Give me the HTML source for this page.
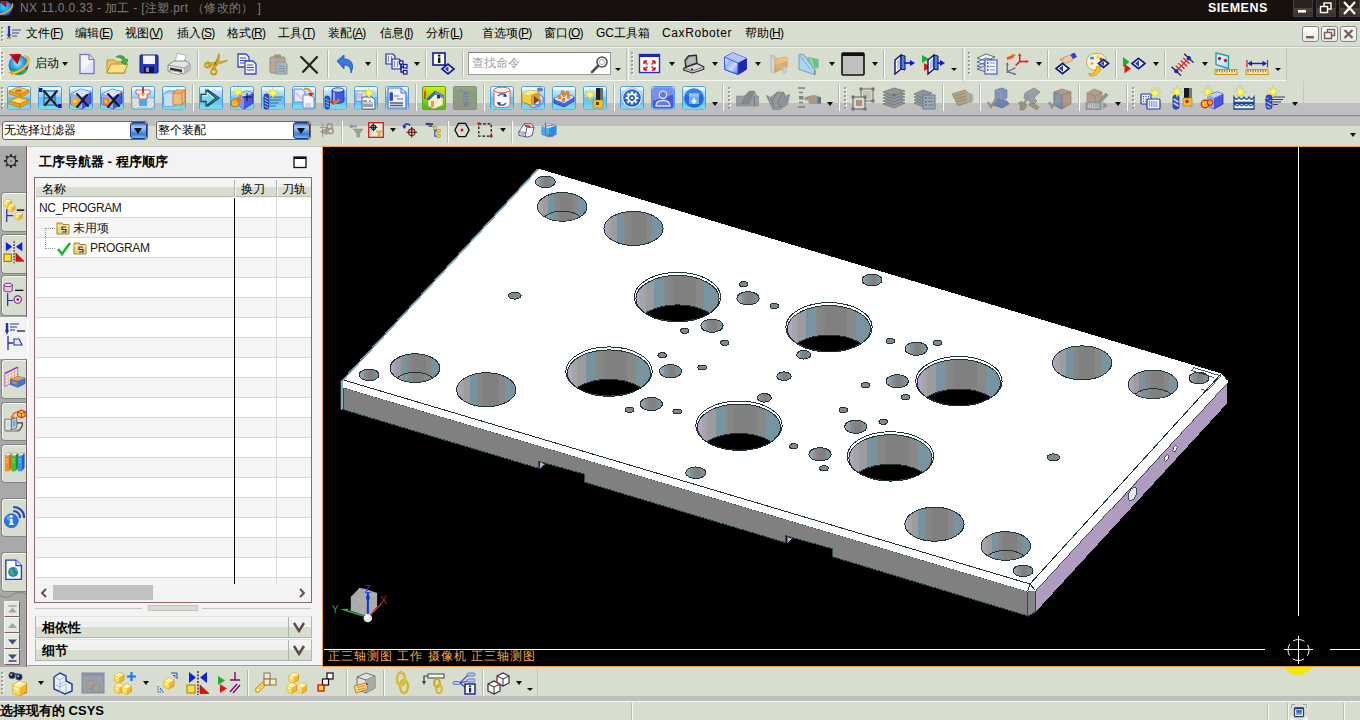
<!DOCTYPE html><html><head><meta charset="utf-8"><title>NX 11.0.0.33</title><style>
*{box-sizing:border-box;margin:0;padding:0}
html,body{width:1360px;height:720px;overflow:hidden;background:#d7decf;font-family:"Liberation Sans",sans-serif;font-size:13px;color:#000}
body{position:relative}
.a{position:absolute}
svg{position:absolute;overflow:visible}
#title{left:0;top:0;width:1360px;height:22px;background:#17100c;border-bottom:1px solid #fafaf6;box-shadow:inset 0 -1px 0 #000}
#title .t{left:20px;top:0px;color:#7c7c7c;font-size:12px;line-height:16px;white-space:nowrap;letter-spacing:.34px}
#siemens{left:1208px;top:1px;color:#fff;font-weight:bold;font-size:12.500px;line-height:15px;letter-spacing:.5px}
.wb{top:0;width:20px;height:17px;background:linear-gradient(#2a241c 0,#2a241c 50%,#50443a 50%,#3a3028 100%);border:1px solid #3c3c48;border-top:0}
#menu{left:0;top:22px;width:1360px;height:25px;background:#d7decf;border-bottom:1px solid #bcc0b8}
#menu span{position:absolute;top:4px;font-size:12px;line-height:15px;white-space:nowrap}
#menu span em{font-style:normal;letter-spacing:-.9px}
.mb{top:26px;width:17px;height:16px;border:1px solid #8a8a84;border-radius:3px;background:linear-gradient(#fff,#e8ebe2)}
.tbx{background:#d7decf;border-right:1px solid #c0c4bc;border-bottom:1px solid #f4f6f0;border-left:1px solid #f8faf4}
.sep{width:2px;border-left:1px solid #b4b8b0;border-right:1px solid #fbfcf8}
.grip{width:3px;background:repeating-linear-gradient(#989c94 0,#989c94 2px,transparent 2px,transparent 4px) 0 0/2px 100% no-repeat,repeating-linear-gradient(transparent 0,transparent 1px,#fbfcf8 1px,#fbfcf8 3px,transparent 3px,transparent 4px) 1px 0/2px 100% no-repeat}
.arr{width:0;height:0;border-left:3.500px solid transparent;border-right:3.500px solid transparent;border-top:4px solid #101010}
.arrs{width:0;height:0;border-left:3px solid transparent;border-right:3px solid transparent;border-top:3.500px solid #101010}
#graystrip{left:0;top:103px;width:1360px;height:23px;background:linear-gradient(#bfbfbf 0,#bfbfbf 11.500px,#8ea2ae 11.500px,#7890a0 12.500px,#7890a0 13px,#a8b4ba 13px,#a8b4ba 14px,#bfbfbf 14px,#bfbfbf 100%)}
#selbar{left:0;top:126px;width:1360px;height:20px;background:#d7decf}
.combo{top:121px;height:19px;background:#fff;border:1px solid #7a5c5c;border-radius:3px;font-size:12px;line-height:17px;white-space:nowrap;overflow:hidden}
.combo i{position:absolute;right:0;top:0;width:17px;height:17px;background:linear-gradient(#2858b8 0,#a8ccf8 25%,#78a8e8 50%,#3878d0 75%,#80b8f0 100%);border:1px solid #183888;border-radius:3px}
.combo i:after{content:"";position:absolute;left:3px;top:5px;border-left:4.500px solid transparent;border-right:4.500px solid transparent;border-top:6px solid #101010}
#left{left:0;top:146px;width:27px;height:521px;background:#a9a9a9;border-right:1px solid #7c5e62}
.tab{left:1px;width:25px;background:#d7decf;border:1px solid #868686;border-right:0;border-radius:4px 0 0 4px;box-shadow:inset 1px 1px 0 #f4f6f0}
.sb{left:4px;width:16px;height:16px;background:#e6e8e2;border:1px solid #f4f4f0;border-right:1px solid #7c5e62;border-bottom:1px solid #7c5e62}
#nav{left:27px;top:146px;width:295px;height:520px;background:#f3f3f3;border-bottom:1px solid #9a9a9a;border-left:1px solid #fff;border-top:1px solid #c8c8c4}
#navt{left:39px;top:154px;font-weight:bold;font-size:13px;line-height:16px;white-space:nowrap}
#tree{left:34px;top:177px;width:278px;height:426px;border:1px solid #8a6a6c;background:#f4f4f4;overflow:hidden}
.hd{top:1px;height:18px;background:linear-gradient(#f6f6f4 0,#f2f2f0 45%,#d7decf 50%,#d7decf 100%);border-bottom:1px solid #b8bcb4;font-size:12px;line-height:20px;white-space:nowrap}
.row{left:1px;width:275px;height:20px;border-bottom:1px solid #d2dccf}
.sect{left:35px;width:277px;height:22px;background:linear-gradient(#f4f4f2 0,#f0f0ee 48%,#d7decf 52%,#d7decf 100%);border:1px solid #b4b4b0;border-top-color:#e4e4e0;font-weight:bold;font-size:13px;line-height:22px;padding-left:6px}
#view{left:322px;top:146px;width:1038px;height:521px;background:#000;border:1px solid #f2a050;border-right:0;overflow:hidden}
#btb{left:0;top:667px;width:1360px;height:35px;background:linear-gradient(#d7decf 0,#d7decf 29px,#bfbfbf 29px,#bfbfbf 34px,#f6f6f2 34px,#f6f6f2 35px)}
#status{left:0;top:702px;width:1360px;height:18px;background:#d7decf}
#status b{position:absolute;left:0;top:1px;font-size:13px;line-height:16px;white-space:nowrap}
</style></head><body><svg width="0" height="0" style="position:absolute"><defs>
<linearGradient id="tile" x1="0" x2="0" y1="0" y2="1"><stop offset="0" stop-color="#ffffff"/><stop offset=".18" stop-color="#c8e8fc"/><stop offset=".45" stop-color="#98d0f8"/><stop offset=".46" stop-color="#70c0f0"/><stop offset="1" stop-color="#68d0f0"/></linearGradient>
<linearGradient id="tileg" x1="0" x2="0" y1="0" y2="1"><stop offset="0" stop-color="#e8e810"/><stop offset=".5" stop-color="#90d020"/><stop offset="1" stop-color="#48b818"/></linearGradient>
</defs></svg>
<div id="title" class="a"><div class="a t">NX 11.0.0.33 - 加工 - [注塑.prt （修改的） ]</div><div id="siemens" class="a">SIEMENS</div>
<svg style="left:0px;top:0px" width="18" height="18" viewBox="0 0 18 18"><defs><radialGradient id="gl" cx=".45" cy=".4" r=".7"><stop offset="0" stop-color="#30d8f8"/><stop offset=".6" stop-color="#2080e8"/><stop offset="1" stop-color="#0828a0"/></radialGradient></defs><circle cx="5" cy="8.500" r="7.300" fill="url(#gl)"/><path d="M12 3.500c2 3-3 9-12 11" fill="none" stroke="#f0a818" stroke-width="1.500"/><path d="M0 1h7l-1 6.500z" fill="#e01010"/><path d="M2 3l4 4.500V1z" fill="#b00808"/></svg>
<div class="a wb" style="left:1293px"></div><div class="a wb" style="left:1316px"></div><div class="a wb" style="left:1339px;width:21px"></div>
<svg style="left:1293px;top:0px" width="20" height="17" viewBox="0 0 20 17"><rect x="5" y="10" width="8" height="2.600" fill="#fff"/></svg>
<svg style="left:1316px;top:0px" width="20" height="17" viewBox="0 0 20 17"><rect x="8" y="3" width="7" height="6" fill="none" stroke="#fff" stroke-width="1.400"/><rect x="4.500" y="6.500" width="7" height="6" fill="#2a241c" stroke="#fff" stroke-width="1.400"/></svg>
<svg style="left:1339px;top:0px" width="21" height="17" viewBox="0 0 21 17"><path d="M5 2l11 12M16 2L5 14" stroke="#fff" stroke-width="2.200"/></svg>
</div>
<div id="menu" class="a"><span style="left:26px">文件<em>(<u>F</u>)</em></span><span style="left:75px">编辑<em>(<u>E</u>)</em></span><span style="left:125px">视图<em>(<u>V</u>)</em></span><span style="left:177px">插入<em>(<u>S</u>)</em></span><span style="left:227px">格式<em>(<u>R</u>)</em></span><span style="left:278px">工具<em>(<u>T</u>)</em></span><span style="left:328px">装配<em>(<u>A</u>)</em></span><span style="left:380px">信息<em>(<u>I</u>)</em></span><span style="left:426px">分析<em>(<u>L</u>)</em></span><span style="left:482px">首选项<em>(<u>P</u>)</em></span><span style="left:544px">窗口<em>(<u>O</u>)</em></span><span style="left:596px">GC工具箱</span><span style="left:662px"><em style="letter-spacing:.6px">CaxRoboter</em></span><span style="left:745px">帮助<em>(<u>H</u>)</em></span></div>
<div class="a grip" style="left:1px;top:27px;height:16px"></div>
<svg style="left:5px;top:25px" width="16" height="16" viewBox="0 0 16 16"><path d="M4 1v10" stroke="#2030c0" stroke-width="2.200"/><path d="M2 9l2 5 2-5z" fill="#2030c0"/><path d="M2 13l4 0" stroke="#c8a020" stroke-width="2"/><path d="M7 5h9M7 8h7M7 11h5" stroke="#404890" stroke-width="1.100"/></svg>
<div class="a mb" style="left:1302px"></div>
<svg style="left:1302px;top:26px" width="17" height="16" viewBox="0 0 17 16"><rect x="4" y="10" width="8" height="2.400" fill="#7a5e5e"/></svg>
<div class="a mb" style="left:1321px"></div>
<svg style="left:1321px;top:26px" width="17" height="16" viewBox="0 0 17 16"><rect x="6.500" y="3.500" width="7" height="6" fill="none" stroke="#7a5e5e" stroke-width="1.500"/><rect x="3.500" y="6.500" width="7" height="6" fill="#f4f5f0" stroke="#7a5e5e" stroke-width="1.500"/></svg>
<div class="a mb" style="left:1340px"></div>
<svg style="left:1340px;top:26px" width="17" height="16" viewBox="0 0 17 16"><path d="M4.500 4l8 8M12.500 4l-8 8" stroke="#7a5e5e" stroke-width="2.400"/></svg>
<div class="a tbx" style="left:0;top:47px;width:627px;height:34px"></div>
<div class="a tbx" style="left:628px;top:47px;width:335px;height:34px"></div>
<div class="a tbx" style="left:964px;top:47px;width:323px;height:34px"></div>
<div class="a" style="left:0;top:47px;width:1360px;height:1px;background:#eef1ea"></div>
<svg style="left:7px;top:52px" width="24" height="24" viewBox="0 0 24 24"><defs><radialGradient id="gl2" cx=".45" cy=".4" r=".7"><stop offset="0" stop-color="#b8f0ff"/><stop offset=".35" stop-color="#38b8f0"/><stop offset=".75" stop-color="#1858d8"/><stop offset="1" stop-color="#0828a0"/></radialGradient></defs>
<circle cx="11.500" cy="13" r="10" fill="url(#gl2)"/><path d="M5 17c2-1 5 0 7 2s1 4-1 4c-3 0-6-2-6-6z" fill="#30a838"/><path d="M14 19c2-2 5-2 6-1-1 3-3 4-6 5z" fill="#38b040"/>
<path d="M17 4.500c4 0 6 3 3 8-3 4-9 8-16 9" fill="none" stroke="#e8a010" stroke-width="2.600"/><path d="M17 4.500c4 0 6 3 3 8-3 4-9 8-16 9" fill="none" stroke="#ffe070" stroke-width=".8"/><path d="M1 20l5-1 0 4z" fill="#e8a010"/>
<path d="M2 2h12l-3.500 10.500z" fill="#e81818"/><path d="M5 4l5.500 8.500L14 2z" fill="#a80c0c"/></svg>
<svg style="left:75px;top:52px" width="24" height="24" viewBox="0 0 24 24"><path d="M5 2.5h9l5 5v14H5z" fill="#f4f6ff" stroke="#7878d0" stroke-width="1.4"/><path d="M14 2.5v5h5" fill="#d8dcf8" stroke="#7878d0" stroke-width="1.2"/><path d="M6 20l12-11v11z" fill="#dfe4fa"/></svg>
<svg style="left:105px;top:52px" width="24" height="24" viewBox="0 0 24 24"><path d="M2 8h7l2 2h9v11H2z" fill="#e8c860" stroke="#b89020" stroke-width="1"/><path d="M2 21l4-9h17l-4 9z" fill="#f8e088" stroke="#b89020" stroke-width="1"/>
<path d="M11 5c4-3 9-1 10 3l2-1-2 6-5-3 2-1c-1-3-4-4-7-4z" fill="#40b040" stroke="#208020" stroke-width=".6"/></svg>
<svg style="left:137px;top:52px" width="24" height="24" viewBox="0 0 24 24"><rect x="3" y="3" width="18" height="18" rx="1" fill="#2838c8" stroke="#101880" stroke-width="1"/><rect x="6" y="3.5" width="12" height="8.5" fill="#f4f4ff"/><rect x="7" y="14.5" width="10" height="6.5" fill="#181830"/><rect x="9" y="15.5" width="3" height="4.5" fill="#8890e0"/></svg>
<svg style="left:167px;top:52px" width="24" height="24" viewBox="0 0 24 24"><path d="M10 1.500l9 1.500-2 8H8z" fill="#fff" stroke="#98b0d0" stroke-width=".9"/><path d="M1 13l6-4h12l4 3v6l-6 4-16-3z" fill="#e4e4e4" stroke="#808080" stroke-width=".9"/><path d="M1 13l16 3 6-4" fill="none" stroke="#909090" stroke-width=".9"/><path d="M17 16v6l6-4v-6z" fill="#b8b8b8"/><path d="M3 15.500l12 2.300v2.400L3 18z" fill="#303030"/><path d="M4 18.500l10 2 -1 2-10-2z" fill="#fff" stroke="#707070" stroke-width=".6"/></svg>
<svg style="left:204px;top:52px" width="24" height="24" viewBox="0 0 24 24"><path d="M14.900 1.600c1.500 5-1.500 11-5 16.300l-1.800-1.600c3-5 5.500-9.500 6.800-14.700z" fill="#d8a818" stroke="#a07808" stroke-width=".6"/><path d="M23.500 8.500c-5 3-12 4.500-19.500 5l-.3-2.300c7-.6 13.500-1.700 19.800-2.700z" fill="#e8c040" stroke="#a07808" stroke-width=".6"/><circle cx="3.800" cy="13" r="2.700" fill="none" stroke="#c89810" stroke-width="1.800"/><circle cx="9.800" cy="19.800" r="2.700" fill="none" stroke="#c89810" stroke-width="1.800"/><circle cx="11.500" cy="11.500" r="1" fill="#806008"/></svg>
<svg style="left:235px;top:52px" width="24" height="24" viewBox="0 0 24 24"><path d="M3 2h8l3 3v10H3z" fill="#f4f6ff" stroke="#3848c0" stroke-width="1.3"/><path d="M5 6h6M5 8.5h7M5 11h7" stroke="#3848c0" stroke-width="1"/>
<path d="M10 9h8l3 3v10H10z" fill="#f4f6ff" stroke="#3848c0" stroke-width="1.3"/><path d="M12 13h6M12 15.5h7M12 18h7" stroke="#3848c0" stroke-width="1"/></svg>
<svg style="left:266px;top:52px" width="24" height="24" viewBox="0 0 24 24"><rect x="4" y="5" width="15" height="16" rx="1.5" fill="#b8a898" stroke="#988878" stroke-width="1"/><rect x="8" y="2.5" width="7" height="4" rx="1" fill="#a09488"/><path d="M10 10h9l2 2v10H10z" fill="#a8b4c0" stroke="#8898a8" stroke-width="1"/><path d="M12 14h6M12 16.5h7M12 19h7" stroke="#8090a0" stroke-width="1"/></svg>
<svg style="left:297px;top:52px" width="24" height="24" viewBox="0 0 24 24"><path d="M4.200 5l15.800 15.800M20 5L6.200 19.800" stroke="#2a2420" stroke-width="2.300" stroke-linecap="round"/></svg>
<svg style="left:334px;top:52px" width="24" height="24" viewBox="0 0 24 24"><path d="M3 9l7-6v4c7 0 11 5 7 14 0-6-3-8-7-8v4z" fill="#3878e0" stroke="#2050b0" stroke-width=".8"/></svg>
<svg style="left:384px;top:52px" width="24" height="24" viewBox="0 0 24 24"><path d="M2 2h7l2 2v8H2z" fill="#e8ecff" stroke="#2030a0" stroke-width="1.2"/><path d="M4 5h1M7 5h1M4 7h1M7 7h1M4 9h1M7 9h1" stroke="#2030a0" stroke-width="1.2"/>
<path d="M8 7h7l2 2v8H8z" fill="#e8ecff" stroke="#2030a0" stroke-width="1.2"/><path d="M10 10h1M13 10h1M10 12h1M13 12h1M10 14h1M13 14h1" stroke="#2030a0" stroke-width="1.2"/>
<path d="M17 11v9h3M17 15h3" fill="none" stroke="#1018a0" stroke-width="1.3"/><rect x="19.5" y="12.5" width="3.5" height="3.5" fill="#fff" stroke="#1018a0" stroke-width="1.2"/><rect x="19.5" y="18.5" width="3.5" height="3.5" fill="#fff" stroke="#1018a0" stroke-width="1.2"/><rect x="15.5" y="9" width="3.5" height="3" fill="#fff" stroke="#1018a0" stroke-width="1.2"/></svg>
<svg style="left:432px;top:52px" width="24" height="24" viewBox="0 0 24 24"><rect x="1" y="1" width="12" height="12" fill="#fff" stroke="#101890" stroke-width="1.600"/><rect x="6" y="5.500" width="2.400" height="5.500" fill="#101010"/><rect x="6" y="2.600" width="2.400" height="2" fill="#101010"/><path d="M16 12.2l6 4.800000000000001-6 4.800000000000001-6-4.800000000000001z" fill="#fff" stroke="#101880" stroke-width="1.700"/><path d="M16.5 14.0l-3.7199999999999998 3.0 3.7199999999999998 3.0z" fill="#2040d0"/></svg>
<svg style="left:638px;top:52px" width="24" height="24" viewBox="0 0 24 24"><rect x="1.500" y="2.500" width="20" height="18" fill="#fff" stroke="#2030c0" stroke-width="1.400"/><rect x="1.500" y="2.500" width="20" height="2.600" fill="#1828b0"/>
<path d="M6 9h3M6 9v3M6 9l3.500 3.500M17 9h-3M17 9v3M17 9l-3.500 3.500M6 18h3M6 18v-3M6 18l3.500-3.500M17 18h-3M17 18v-3M17 18l-3.500-3.500" stroke="#e01010" stroke-width="1.400" fill="none"/></svg>
<svg style="left:682px;top:52px" width="24" height="24" viewBox="0 0 24 24"><path d="M3 8.500L6.500 4l7.800-.900.700 8L3.800 15z" fill="#a4a4a4" stroke="#282828" stroke-width="1.300" stroke-linejoin="round"/><path d="M5 9l2.200-3.300 5.600-.600.400 5L5.500 13z" fill="#b8b8b8"/><path d="M2 16l13-4.500 6.800 3.300v2.400L10.500 21 1.500 18z" fill="#d8d8d8" stroke="#282828" stroke-width="1.200" stroke-linejoin="round"/><path d="M2 16l8.500 3 11.300-4.200" fill="none" stroke="#606060" stroke-width=".8"/><circle cx="10" cy="17.300" r="1.100" fill="#282828"/></svg>
<svg style="left:724px;top:52px" width="24" height="24" viewBox="0 0 24 24"><defs><linearGradient id="cbf" x1="0" x2="1" y1="0" y2="1"><stop offset="0" stop-color="#e8f0ff"/><stop offset=".35" stop-color="#a0b8f8"/><stop offset=".6" stop-color="#c8d8ff"/><stop offset="1" stop-color="#5070e8"/></linearGradient></defs><path d="M.5 5.200L9 .8 22.500 6.500v10.800L14 22.500.8 17.500z" fill="#3048d8" stroke="#2838c8" stroke-width="1"/><path d="M.5 5.200L9 .8 22.500 6.500 14 11z" fill="#b0c8ff"/><path d="M14 11l8.500-4.500v10.800L14 22.500z" fill="#2028b0"/><path d="M.5 5.200L14 11v11.500L.8 17.500z" fill="url(#cbf)" stroke="#3050e0" stroke-width=".9"/></svg>
<svg style="left:767px;top:52px" width="24" height="24" viewBox="0 0 24 24"><g opacity=".72"><path d="M4 3l4 1v17l-4-1z" fill="#d8d8d8" stroke="#a0a0a0" stroke-width=".8"/><path d="M8 7l12-2v10l-12 5z" fill="#e89838" stroke="#c07820" stroke-width=".8"/><path d="M8 7l12-2v4L8 13z" fill="#f8b860"/><path d="M4 3l14 17" stroke="#b8b8b8" stroke-width="1.2"/><path d="M16 15v6l3-1v-6z" fill="#d0d0d0" stroke="#a0a0a0" stroke-width=".6"/></g></svg>
<svg style="left:798px;top:52px" width="24" height="24" viewBox="0 0 24 24"><path d="M9.500 5.500l10.600 2v8l-5 1.300z" fill="#88e098" stroke="#70a880" stroke-width=".8"/><path d="M14 7l6 1v7l-3 .8z" fill="#60c878"/><path d="M1 2.300h4.500L16.800 18v4.700L1 17.400z" fill="#a8d8f0" stroke="#8098b8" stroke-width="1"/><path d="M5.500 2.300L16.800 18M1 2.300l11.500 15.500" fill="none" stroke="#88a8c8" stroke-width="1"/><path d="M16.800 18v4.700" stroke="#7888a0" stroke-width="1.400"/></svg>
<svg style="left:841px;top:52px" width="24" height="24" viewBox="0 0 24 24"><rect x="1" y="1" width="22" height="22" rx="1" fill="#c0c0c0" stroke="#101010" stroke-width="1.6"/><rect x="1" y="1" width="22" height="3" fill="#101010"/></svg>
<svg style="left:892px;top:52px" width="24" height="24" viewBox="0 0 24 24"><path d="M3 8l6-5v14l-6 5z" fill="#fff" stroke="#101060" stroke-width="1.4"/><path d="M9 3l4 1v14l-4-1z" fill="#5080e0" stroke="#101060" stroke-width="1"/><path d="M5 9l3-2.500v9L5 18z" fill="#b0c8f8"/><path d="M12 11h7" stroke="#1010e0" stroke-width="1.6"/><path d="M18 8l5 3-5 3z" fill="#1010e0"/></svg>
<svg style="left:921px;top:52px" width="24" height="24" viewBox="0 0 24 24"><path d="M1 3l7 4-7 4z" fill="#18b030"/><path d="M3 11l7 4-7 4z" fill="#e01818"/><path d="M7 8l6-5v14l-6 5z" fill="#fff" stroke="#101060" stroke-width="1.4"/><path d="M13 3l4 1v14l-4-1z" fill="#5080e0" stroke="#101060" stroke-width="1"/><path d="M9 9l3-2.500v9L9 18z" fill="#b0c8f8"/><path d="M16 11h4" stroke="#1010e0" stroke-width="1.6"/><path d="M19 8l5 3-5 3z" fill="#1010e0"/></svg>
<svg style="left:975px;top:52px" width="24" height="24" viewBox="0 0 24 24"><path d="M2 6l9-4 9 3-9 4zM2 10l9-4 9 3-9 4zM2 14l9-4 9 3-9 4z" fill="#e8f0f8" stroke="#506070" stroke-width=".9"/><path d="M2 17l9-4 9 3-9 4z" fill="#c8d8e8" stroke="#506070" stroke-width=".9"/>
<rect x="10" y="8" width="12" height="14" fill="#f0f4ff" stroke="#4860c0" stroke-width="1.2"/><path d="M12 11h1.500M12 14.500h1.500M12 18h1.500" stroke="#2030a0" stroke-width="1.6"/><path d="M15 11h5M15 14.500h5M15 18h5" stroke="#8090c0" stroke-width="1.2"/></svg>
<svg style="left:1005px;top:52px" width="24" height="24" viewBox="0 0 24 24"><path d="M2.300 21V11M2.300 19.600l8 2.600M2.300 19.600l7.700-3.600" stroke="#687078" stroke-width="1.300" fill="none"/><path d="M.8 13l1.500-3 1.500 3zM9 21l2.500 1.500-2.800.800zM8.500 15.500l2.500.200-1.800 1.800z" fill="#687078"/>
<path d="M14.700 9.600V3M14.700 9.600H22M14.700 9.600l-4 3.800" stroke="#e01818" stroke-width="1.500" fill="none"/><path d="M13.200 4l1.500-3 1.500 3zM21 8.100l3 1.500-3 1.500z" fill="#e01818"/><path d="M2 6.800l6-2.500" stroke="#f05010" stroke-width="2.600"/><path d="M6.500 1.800l4.500 1-3 3.500z" fill="#f07818"/></svg>
<svg style="left:1054px;top:52px" width="24" height="24" viewBox="0 0 24 24"><path d="M6 7.500c2-1 4-2.500 6-3l5-1.500 2 4.500c-2 2-5 3.500-8 3.500-2-1-3.500-2-5-3.500z" fill="#f0c8a0" stroke="#b08860" stroke-width=".7"/><path d="M6 7.500l4-.5" stroke="#b08860" stroke-width=".7"/><path d="M16.500 2.500l4-2 2.500 4.500-4 2z" fill="#3040d0"/><path d="M8.5 11.3l6.5 5.2-6.5 5.2-6.5-5.2z" fill="#fff" stroke="#101880" stroke-width="1.700"/><path d="M9.0 13.25l-4.03 3.25 4.03 3.25z" fill="#2040d0"/></svg>
<svg style="left:1085px;top:52px" width="24" height="24" viewBox="0 0 24 24"><path d="M10 1.500c6-1 11 2 11 6 0 3-3 4-5 4s-2 2-1 3c1 2-1 4-4 4-6 0-9.500-3.500-9.500-8.500s3.500-8 8.500-8.500z" fill="#fcf0d0" stroke="#d0a050" stroke-width="1"/><ellipse cx="7" cy="6" rx="2.200" ry="1.500" fill="#3090f0"/><ellipse cx="13" cy="4.500" rx="2.200" ry="1.500" fill="#f8e020"/><circle cx="16" cy="7" r="1.500" fill="#e02020"/><circle cx="7" cy="11.500" r="1.300" fill="#d0a050"/>
<path d="M4 21c2 2 6 0 7-4l1-3 3 1c1 4-2 7-5 8-3 2-7 1-6-2z" fill="#f8c828" stroke="#c08810" stroke-width=".7"/><path d="M18.5 7.5l5 4.0-5 4.0-5-4.0z" fill="#fff" stroke="#101880" stroke-width="1.700"/><path d="M19.0 9.0l-3.1 2.5 3.1 2.5z" fill="#2040d0"/></svg>
<svg style="left:1122px;top:52px" width="24" height="24" viewBox="0 0 24 24"><path d="M1 5l6.500 5L1 15z" fill="#18b030"/><path d="M2.500 12l6.500 4.500-6.500 5z" fill="#e01818"/><path d="M16.5 6.3l6.5 5.2-6.5 5.2-6.5-5.2z" fill="#fff" stroke="#101880" stroke-width="1.700"/><path d="M17.0 8.25l-4.03 3.25 4.03 3.25z" fill="#2040d0"/></svg>
<svg style="left:1171px;top:52px" width="24" height="24" viewBox="0 0 24 24"><path d="M5.3 19.2L17.9 6.2" stroke="#e01818" stroke-width="1.100"/><path d="M4.7 13.7L11.0 19.5M7.2 11.1L13.5 16.9M9.7 8.5L16.0 14.3M12.2 5.9L18.5 11.7" stroke="#e01818" stroke-width="1.200"/><path d="M0.6 14.8L10.0 23.6" stroke="#181818" stroke-width="1.300"/><circle cx="5.3" cy="19.2" r="2.100" fill="#1020e8"/><path d="M13.2 1.8L22.6 10.6" stroke="#181818" stroke-width="1.300"/><circle cx="17.9" cy="6.2" r="2.100" fill="#1020e8"/></svg>
<svg style="left:1214px;top:52px" width="24" height="24" viewBox="0 0 24 24"><defs><linearGradient id="rp" x1="0" x2="1" y1="0" y2="1"><stop offset="0" stop-color="#f0fcff"/><stop offset="1" stop-color="#a0dcf0"/></linearGradient></defs><path d="M2 .800l12.500 3.200v12.500L2 12.500z" fill="url(#rp)" stroke="#1898a0" stroke-width="1.300"/><circle cx="5.500" cy="6.500" r="1.700" fill="#e01010"/><circle cx="11.500" cy="8.500" r="1.700" fill="#e01010"/><rect x="1" y="17.500" width="22" height="5" fill="#f8e890" stroke="#c09818" stroke-width="1"/><path d="M3 18v2.500M8 18v2.500M13 18v2.500M18 18v2.500" stroke="#3050d0" stroke-width=".9"/><path d="M5.500 18v1.800M10.500 18v1.800M15.500 18v1.800M20.500 18v1.800" stroke="#d03030" stroke-width=".9"/></svg>
<svg style="left:1245px;top:52px" width="24" height="24" viewBox="0 0 24 24"><path d="M2 8v7.500M22.500 8v7.500" stroke="#e01010" stroke-width="1.200"/><path d="M4 11.500h16.500" stroke="#1020c0" stroke-width="1.400"/><path d="M2.500 11.500l4.500-2.800v5.600zM22 11.500l-4.500-2.800v5.600z" fill="#1020c0"/><rect x="1" y="17.500" width="22" height="5" fill="#f8e890" stroke="#c09818" stroke-width="1"/><path d="M3 18v2.500M8 18v2.500M13 18v2.500M18 18v2.500" stroke="#3050d0" stroke-width=".9"/><path d="M5.500 18v1.800M10.500 18v1.800M15.500 18v1.800M20.500 18v1.800" stroke="#d03030" stroke-width=".9"/></svg>
<div class="a" style="left:35px;top:56px;font-size:12px;line-height:15px;white-space:nowrap">启动</div>
<div class="a arr" style="left:61.5px;top:62px"></div>
<div class="a arr" style="left:364.5px;top:62px"></div>
<div class="a arr" style="left:413.5px;top:62px"></div>
<div class="a arr" style="left:668.5px;top:62px"></div>
<div class="a arr" style="left:711.5px;top:62px"></div>
<div class="a arr" style="left:754.5px;top:62px"></div>
<div class="a arr" style="left:828.5px;top:62px"></div>
<div class="a arr" style="left:871.5px;top:62px"></div>
<div class="a arr" style="left:1035.5px;top:62px"></div>
<div class="a arr" style="left:1152.5px;top:62px"></div>
<div class="a arr" style="left:1201.5px;top:62px"></div>
<div class="a arrs" style="left:614.5px;top:68px"></div>
<div class="a arrs" style="left:950.5px;top:68px"></div>
<div class="a arrs" style="left:1274.5px;top:68px"></div>
<div class="a sep" style="left:197px;top:50px;height:28px"></div>
<div class="a sep" style="left:327px;top:50px;height:28px"></div>
<div class="a sep" style="left:376px;top:50px;height:28px"></div>
<div class="a sep" style="left:425px;top:50px;height:28px"></div>
<div class="a sep" style="left:462px;top:50px;height:28px"></div>
<div class="a sep" style="left:883px;top:50px;height:28px"></div>
<div class="a sep" style="left:1047px;top:50px;height:28px"></div>
<div class="a sep" style="left:1115px;top:50px;height:28px"></div>
<div class="a sep" style="left:1164px;top:50px;height:28px"></div>
<div class="a grip" style="left:1px;top:52px;height:24px"></div>
<div class="a grip" style="left:631px;top:52px;height:24px"></div>
<div class="a grip" style="left:968px;top:52px;height:24px"></div>
<div class="a" style="left:468px;top:52px;width:143px;height:23px;background:#fff;border:1px solid #9a9a9a;border-top-color:#7a7a7a;font-size:12px;line-height:21px;color:#a0a0a0;padding-left:3px;white-space:nowrap">查找命令</div>
<svg style="left:588px;top:54px" width="20" height="20" viewBox="0 0 20 20"><circle cx="14" cy="8" r="5" fill="#fff" stroke="#505050" stroke-width="1.6"/><path d="M10 12l-6 6" stroke="#505050" stroke-width="2.6" stroke-linecap="round"/><circle cx="14" cy="8" r="2.6" fill="none" stroke="#b0b0b0" stroke-width="1"/></svg>
<div id="graystrip" class="a"></div><div id="selbar" class="a"></div>
<div class="a" style="left:0;top:81px;width:1304px;height:22px;background:#d7decf;border-right:1px solid #c4c8c0"></div>
<svg style="left:7px;top:86px" width="24" height="24" viewBox="0 0 24 24"><rect x=".5" y=".5" width="23" height="23" rx="2" fill="url(#tile)" stroke="#4aa0e8" stroke-width="1"/><rect x="1.500" y="1.500" width="21" height="2.500" fill="#f4faff" opacity=".9"/><rect x="1" y="19" width="22" height="4.500" fill="#78d8f0"/><path d="M2 5l9-4 11 3-9 4z" fill="#f8d060" stroke="#c08010" stroke-width=".8"/><path d="M2 5v3l11 4V8zM13 8l9-4v3l-9 5z" fill="#e8a020" stroke="#c08010" stroke-width=".6"/><ellipse cx="11.500" cy="4.800" rx="3.500" ry="1.500" fill="#f06030"/>
<path d="M2 15l9-4 11 3-9 4z" fill="#f8d060" stroke="#c08010" stroke-width=".8"/><path d="M2 15v3l11 4v-4zM13 18l9-4v3l-9 5z" fill="#e8a020" stroke="#c08010" stroke-width=".6"/><ellipse cx="11.500" cy="14.800" rx="3.500" ry="1.500" fill="#f8e890"/></svg>
<svg style="left:38px;top:86px" width="24" height="24" viewBox="0 0 24 24"><rect x=".5" y=".5" width="23" height="23" rx="2" fill="url(#tile)" stroke="#4aa0e8" stroke-width="1"/><rect x="1.500" y="1.500" width="21" height="2.500" fill="#f4faff" opacity=".9"/><rect x="1" y="19" width="22" height="4.500" fill="#78d8f0"/><rect x="1" y="2" width="3.500" height="4" fill="#1018b0"/><rect x="20" y="18" width="3.500" height="4" fill="#1018b0"/><path d="M6 5h11v14H6z" fill="none" stroke="#3080c0" stroke-width="1.600"/><path d="M6 12h11" stroke="#3080c0" stroke-width="1.600"/><path d="M6 5l13 15M19 5L7 19" stroke="#181818" stroke-width="2" stroke-linecap="round"/></svg>
<svg style="left:69px;top:86px" width="24" height="24" viewBox="0 0 24 24"><rect x=".5" y=".5" width="23" height="23" rx="2" fill="url(#tile)" stroke="#4aa0e8" stroke-width="1"/><rect x="1.500" y="1.500" width="21" height="2.500" fill="#f4faff" opacity=".9"/><rect x="1" y="19" width="22" height="4.500" fill="#78d8f0"/><path d="M2 8l10-5 10 3v11l-9 6-11-5z" fill="#4858e0" stroke="#2030a0" stroke-width=".8"/><path d="M2 8l10-5 10 3-9 5z" fill="#d8e4ff"/><path d="M2 8l11 3v12L2 18z" fill="#98b0f8"/><circle cx="6.500" cy="16" r="4" fill="#f8a020"/><circle cx="6" cy="15" r="2" fill="#f8d040"/><path d="M8 8l11 12M18 9L8 21" stroke="#181818" stroke-width="2" stroke-linecap="round"/></svg>
<svg style="left:100px;top:86px" width="24" height="24" viewBox="0 0 24 24"><rect x=".5" y=".5" width="23" height="23" rx="2" fill="url(#tile)" stroke="#4aa0e8" stroke-width="1"/><rect x="1.500" y="1.500" width="21" height="2.500" fill="#f4faff" opacity=".9"/><rect x="1" y="19" width="22" height="4.500" fill="#78d8f0"/><path d="M2 8l10-5 10 3v11l-9 6-11-5z" fill="#4858e0" stroke="#2030a0" stroke-width=".8"/><path d="M2 8l10-5 10 3-9 5z" fill="#d8e4ff"/><path d="M2 8l11 3v12L2 18z" fill="#98b0f8"/><path d="M3 11l6 2v8l-6-2z" fill="#f07020"/><path d="M4.500 13l3 1v4l-3-1z" fill="#f8c040"/><path d="M8 8l11 12M18 9L8 21" stroke="#181818" stroke-width="2" stroke-linecap="round"/></svg>
<svg style="left:131px;top:86px" width="24" height="24" viewBox="0 0 24 24"><rect x=".5" y=".5" width="23" height="23" rx="2" fill="url(#tile)" stroke="#4aa0e8" stroke-width="1"/><rect x="1.500" y="1.500" width="21" height="2.500" fill="#f4faff" opacity=".9"/><rect x="1" y="19" width="22" height="4.500" fill="#78d8f0"/><path d="M1 12h7v5h8v-5h7v10H1z" fill="#d8dcd8" stroke="#a8b0a8" stroke-width=".6"/><path d="M1 15l3-3M2 19l7-7M4 22l5-5M16 20l6-6M18 22l5-5M16 15l3-3" stroke="#f4f4f4" stroke-width="1"/><path d="M5 4h14v4h-3v5H8V8H5z" fill="#f8f8ff" stroke="#c04040" stroke-width=".8"/><path d="M8 13h8v7H8z" fill="#50a8e0"/><path d="M12 1v7" stroke="#e02010" stroke-width="1.800"/><path d="M9.500 7l2.500 4 2.500-4z" fill="#f8a010"/></svg>
<svg style="left:162px;top:86px" width="24" height="24" viewBox="0 0 24 24"><rect x=".5" y=".5" width="23" height="23" rx="2" fill="url(#tile)" stroke="#4aa0e8" stroke-width="1"/><rect x="1.500" y="1.500" width="21" height="2.500" fill="#f4faff" opacity=".9"/><rect x="1" y="19" width="22" height="4.500" fill="#78d8f0"/><path d="M2 8l4-3h10v12l-4 3H2z" fill="#a8d0f0" stroke="#5088c0" stroke-width=".8"/><path d="M2 8h10v12H2z" fill="#c8e4f8" opacity=".8"/><path d="M11 7l3-3h9v11l-3 4h-9z" fill="#f0c070" stroke="#e07030" stroke-width="1" opacity=".92"/><path d="M11 7h9v12M20 7l3-3" fill="none" stroke="#e07030" stroke-width=".9"/></svg>
<svg style="left:199px;top:86px" width="24" height="24" viewBox="0 0 24 24"><rect x=".5" y=".5" width="23" height="23" rx="2" fill="url(#tile)" stroke="#4aa0e8" stroke-width="1"/><rect x="1.500" y="1.500" width="21" height="2.500" fill="#f4faff" opacity=".9"/><rect x="1" y="19" width="22" height="4.500" fill="#78d8f0"/><path d="M9 4l11 8-11 8v-4.500l5-3.500-5-3.500z" fill="#58c0d0" stroke="#204858" stroke-width="1.300"/><path d="M2 8.500h5V4l10 8-10 8v-4.500H2z" fill="#78d8e8" stroke="#204858" stroke-width="1.300"/><path d="M3 9.800h5.200V6.500l6.500 5.500" fill="none" stroke="#e8fcff" stroke-width="1"/></svg>
<svg style="left:230px;top:86px" width="24" height="24" viewBox="0 0 24 24"><rect x=".5" y=".5" width="23" height="23" rx="2" fill="url(#tile)" stroke="#4aa0e8" stroke-width="1"/><rect x="1.500" y="1.500" width="21" height="2.500" fill="#f4faff" opacity=".9"/><rect x="1" y="19" width="22" height="4.500" fill="#78d8f0"/><path d="M8 8l9-3 6 2v10l-9 6-6-4z" fill="#4858e0" stroke="#2030a0" stroke-width=".8"/><path d="M8 8l9-3 6 2-9 4z" fill="#c0d0ff"/><path d="M8 8l6 3v12l-6-4z" fill="#8098f0"/><path d="M13 11h9M17 7v8" stroke="#101010" stroke-width="1"/><circle cx="5" cy="17" r="4" fill="#f8b820" stroke="#e06010" stroke-width="1"/><circle cx="9" cy="14" r="2.500" fill="#f87020"/><g transform="translate(8 6) scale(0.95)"><path d="M0 -7.500L.9 -1.800 4.800 -4.800 1.800 -.900 7.500 0 1.800 .900 4.800 4.800 .900 1.800 0 7.500 -.900 1.800 -4.800 4.800 -1.800 .900 -7.500 0 -1.800 -.900 -4.800 -4.800 -.900 -1.800z" fill="#8098b8"/><path d="M0 -6L1.300 -2.200 4 -4 2.200 -1.300 6 0 2.200 1.300 4 4 1.300 2.200 0 6 -1.300 2.200 -4 4 -2.200 1.300 -6 0 -2.200 -1.300 -4 -4 -1.300 -2.200z" fill="#f8f028"/><circle r="2.300" fill="#fcf860"/></g></svg>
<svg style="left:261px;top:86px" width="24" height="24" viewBox="0 0 24 24"><rect x=".5" y=".5" width="23" height="23" rx="2" fill="url(#tile)" stroke="#4aa0e8" stroke-width="1"/><rect x="1.500" y="1.500" width="21" height="2.500" fill="#f4faff" opacity=".9"/><rect x="1" y="19" width="22" height="4.500" fill="#78d8f0"/><rect x="3" y="8" width="5" height="15" rx="2" fill="#3048c0" stroke="#101870" stroke-width=".6"/><path d="M3.500 11l4 2M3.500 14l4 2M3.500 17l4 2M3.500 20l4 2" stroke="#a0c0ff" stroke-width="1"/><path d="M9 11h13M9 14h11M9 17h9M9 20h6" stroke="#506090" stroke-width="1"/><g transform="translate(12 7) scale(0.95)"><path d="M0 -7.500L.9 -1.800 4.800 -4.800 1.800 -.900 7.500 0 1.800 .900 4.800 4.800 .900 1.800 0 7.500 -.900 1.800 -4.800 4.800 -1.800 .900 -7.500 0 -1.800 -.900 -4.800 -4.800 -.900 -1.800z" fill="#8098b8"/><path d="M0 -6L1.300 -2.200 4 -4 2.200 -1.300 6 0 2.200 1.300 4 4 1.300 2.200 0 6 -1.300 2.200 -4 4 -2.200 1.300 -6 0 -2.200 -1.300 -4 -4 -1.300 -2.200z" fill="#f8f028"/><circle r="2.300" fill="#fcf860"/></g></svg>
<svg style="left:292px;top:86px" width="24" height="24" viewBox="0 0 24 24"><rect x=".5" y=".5" width="23" height="23" rx="2" fill="url(#tile)" stroke="#4aa0e8" stroke-width="1"/><rect x="1.500" y="1.500" width="21" height="2.500" fill="#f4faff" opacity=".9"/><rect x="1" y="19" width="22" height="4.500" fill="#78d8f0"/><path d="M2 3h8l3 3v10H2z" fill="#e8e8f8" stroke="#8080c8" stroke-width="1"/><path d="M4 7l6 6" stroke="#c8c8e0" stroke-width="2"/><path d="M11 9h8l3 3v10H11z" fill="#f4f4ff" stroke="#8080c8" stroke-width="1"/><path d="M13 18h6M13 20h6" stroke="#b0b0d8" stroke-width="1"/><path d="M12 3c4-1 7 1 7 5" fill="none" stroke="#f09020" stroke-width="2"/><path d="M16 7l3 4 3-4z" fill="#e02010"/></svg>
<svg style="left:323px;top:86px" width="24" height="24" viewBox="0 0 24 24"><rect x=".5" y=".5" width="23" height="23" rx="2" fill="url(#tile)" stroke="#4aa0e8" stroke-width="1"/><rect x="1.500" y="1.500" width="21" height="2.500" fill="#f4faff" opacity=".9"/><rect x="1" y="19" width="22" height="4.500" fill="#78d8f0"/><path d="M9 4v11c0 3 12 3 12 0V4z" fill="#4058e0" stroke="#1828a0" stroke-width=".8"/><ellipse cx="15" cy="4" rx="6" ry="2.200" fill="#d0dcff" stroke="#1828a0" stroke-width=".8"/><path d="M11 6v9" stroke="#b0c0ff" stroke-width="1.500"/><rect x="2" y="10" width="4.500" height="13" rx="2" fill="#3050c8" stroke="#101870" stroke-width=".6"/><path d="M2.500 13l3.500 2M2.500 16l3.500 2M2.500 19l3.500 2" stroke="#a0c0ff" stroke-width="1"/><path d="M16 13c-1 3-4 4-8 3" fill="none" stroke="#f08010" stroke-width="2.200"/><path d="M10 13l-4 3 5 3z" fill="#e83010"/></svg>
<svg style="left:354px;top:86px" width="24" height="24" viewBox="0 0 24 24"><rect x=".5" y=".5" width="23" height="23" rx="2" fill="url(#tile)" stroke="#4aa0e8" stroke-width="1"/><rect x="1.500" y="1.500" width="21" height="2.500" fill="#f4faff" opacity=".9"/><rect x="1" y="19" width="22" height="4.500" fill="#78d8f0"/><rect x="2" y="5" width="10" height="10" fill="#e8ecf8" stroke="#7080b0" stroke-width=".8"/><path d="M4 7v6M6 7v6M8 7v6" stroke="#8890b0" stroke-width=".8"/><path d="M8 11h10l3 3v9H8z" fill="#f4f6ff" stroke="#506090" stroke-width="1"/><path d="M10 14v7M12 14v7M14 16v5M16 14v7M18 16v5" stroke="#404860" stroke-width="1"/><path d="M9 17h10" stroke="#f4f6ff" stroke-width="1"/><g transform="translate(15 7) scale(0.95)"><path d="M0 -7.500L.9 -1.800 4.800 -4.800 1.800 -.900 7.500 0 1.800 .900 4.800 4.800 .900 1.800 0 7.500 -.900 1.800 -4.800 4.800 -1.800 .900 -7.500 0 -1.800 -.900 -4.800 -4.800 -.900 -1.800z" fill="#8098b8"/><path d="M0 -6L1.300 -2.200 4 -4 2.200 -1.300 6 0 2.200 1.300 4 4 1.300 2.200 0 6 -1.300 2.200 -4 4 -2.200 1.300 -6 0 -2.200 -1.300 -4 -4 -1.300 -2.200z" fill="#f8f028"/><circle r="2.300" fill="#fcf860"/></g></svg>
<svg style="left:385px;top:86px" width="24" height="24" viewBox="0 0 24 24"><rect x=".5" y=".5" width="23" height="23" rx="2" fill="url(#tile)" stroke="#4aa0e8" stroke-width="1"/><rect x="1.500" y="1.500" width="21" height="2.500" fill="#f4faff" opacity=".9"/><rect x="1" y="19" width="22" height="4.500" fill="#78d8f0"/><path d="M3 2h13l5 5v15H3z" fill="#f0f2ff" stroke="#6070c8" stroke-width="1.200"/><path d="M16 2v5h5" fill="#d0d8f8" stroke="#6070c8" stroke-width="1"/><rect x="4.500" y="6" width="3.500" height="9" rx="1.500" fill="#3048c0"/><path d="M9 10h5" stroke="#8088b0" stroke-width="1.200"/><path d="M5 17h13M5 19.500h13" stroke="#505870" stroke-width="1.300"/><path d="M12 13h6" stroke="#9098b8" stroke-width="1.500"/></svg>
<svg style="left:490px;top:86px" width="24" height="24" viewBox="0 0 24 24"><rect x=".5" y=".5" width="23" height="23" rx="2" fill="url(#tile)" stroke="#4aa0e8" stroke-width="1"/><rect x="1.500" y="1.500" width="21" height="2.500" fill="#f4faff" opacity=".9"/><rect x="1" y="19" width="22" height="4.500" fill="#78d8f0"/><path d="M4 4v15c0 3.500 16 3.500 16 0V4z" fill="#fdfdff" stroke="#d06060" stroke-width="1"/><ellipse cx="12" cy="4" rx="8" ry="2.800" fill="#f8f0d8" stroke="#d06060" stroke-width="1"/><path d="M8 10c2-3 6-3 8 0M16 17c-2 3-6 3-8 0" fill="none" stroke="#3060d8" stroke-width="1.500"/><path d="M15 7l2 4-4-.5zM9 20l-2-4 4 .5z" fill="#1838c0"/></svg>
<svg style="left:521px;top:86px" width="24" height="24" viewBox="0 0 24 24"><rect x=".5" y=".5" width="23" height="23" rx="2" fill="url(#tile)" stroke="#4aa0e8" stroke-width="1"/><rect x="1.500" y="1.500" width="21" height="2.500" fill="#f4faff" opacity=".9"/><rect x="1" y="19" width="22" height="4.500" fill="#78d8f0"/><ellipse cx="15" cy="15" rx="8" ry="6" fill="#d8c8e8" stroke="#7060b0" stroke-width=".8" transform="rotate(-30 15 15)"/><circle cx="16" cy="16" r="4" fill="#40a0e0"/><circle cx="16" cy="16" r="2" fill="#f4f8ff"/><path d="M1 8l8-4 9 2v9l-8 4-9-3z" fill="#f0d040" stroke="#b08810" stroke-width=".8"/><path d="M1 8l8-4 9 2-8 3z" fill="#f8e8a0"/><path d="M10 9l8-3v9l-8 4z" fill="#d8a020"/><path d="M13 10l5 4-5 4z" fill="#804010"/><ellipse cx="19" cy="3.500" rx="3" ry="2" fill="#6878d0"/></svg>
<svg style="left:552px;top:86px" width="24" height="24" viewBox="0 0 24 24"><rect x=".5" y=".5" width="23" height="23" rx="2" fill="url(#tile)" stroke="#4aa0e8" stroke-width="1"/><rect x="1.500" y="1.500" width="21" height="2.500" fill="#f4faff" opacity=".9"/><rect x="1" y="19" width="22" height="4.500" fill="#78d8f0"/><path d="M2 13l10-6 10 4v4l-10 6-10-4z" fill="#4868d8" stroke="#2038a0" stroke-width=".8"/><path d="M2 13l10-6 10 4-10 6z" fill="#e8f0ff"/><g fill="#f09030" stroke="#b06010" stroke-width=".5"><rect x="6" y="9.500" width="3" height="3.500" rx="1"/><rect x="10.500" y="7" width="3" height="3.500" rx="1"/><rect x="15" y="9" width="3" height="3.500" rx="1"/><rect x="10" y="12" width="3" height="3.500" rx="1"/><rect x="14" y="5" width="3" height="3.500" rx="1"/><rect x="9" y="4.500" width="3" height="3.500" rx="1"/></g></svg>
<svg style="left:583px;top:86px" width="24" height="24" viewBox="0 0 24 24"><rect x=".5" y=".5" width="23" height="23" rx="2" fill="url(#tile)" stroke="#4aa0e8" stroke-width="1"/><rect x="1.500" y="1.500" width="21" height="2.500" fill="#f4faff" opacity=".9"/><rect x="1" y="19" width="22" height="4.500" fill="#78d8f0"/><rect x="13" y="2" width="7" height="14" fill="#202020"/><rect x="17" y="2" width="3" height="14" fill="#606870"/><path d="M10 14h10v8H10z" fill="#f0c030" stroke="#a07810" stroke-width=".6"/><rect x="13" y="16" width="3" height="3" fill="#604010"/><g transform="translate(7 9) scale(0.95)"><path d="M0 -7.500L.9 -1.800 4.800 -4.800 1.800 -.900 7.500 0 1.800 .900 4.800 4.800 .900 1.800 0 7.500 -.900 1.800 -4.800 4.800 -1.800 .900 -7.500 0 -1.800 -.900 -4.800 -4.800 -.900 -1.800z" fill="#8098b8"/><path d="M0 -6L1.300 -2.200 4 -4 2.200 -1.300 6 0 2.200 1.300 4 4 1.300 2.200 0 6 -1.300 2.200 -4 4 -2.200 1.300 -6 0 -2.200 -1.300 -4 -4 -1.300 -2.200z" fill="#f8f028"/><circle r="2.300" fill="#fcf860"/></g></svg>
<svg style="left:620px;top:86px" width="24" height="24" viewBox="0 0 24 24"><rect x=".5" y=".5" width="23" height="23" rx="2" fill="url(#tile)" stroke="#4aa0e8" stroke-width="1"/><rect x="1.500" y="1.500" width="21" height="2.500" fill="#f4faff" opacity=".9"/><rect x="1" y="19" width="22" height="4.500" fill="#78d8f0"/><circle cx="12" cy="12" r="10.300" fill="#f0f6ff" stroke="#8098c8" stroke-width=".6"/><circle cx="12" cy="12" r="8.800" fill="#2860c8"/><path d="M4 10a8.800 8.800 0 0 1 16 0z" fill="#4888e0" opacity=".6"/><path d="M10.87 5.50 L13.13 5.50 L13.12 7.33 L14.51 7.91 L15.80 6.60 L17.40 8.20 L16.09 9.49 L16.67 10.88 L18.50 10.87 L18.50 13.13 L16.67 13.12 L16.09 14.51 L17.40 15.80 L15.80 17.40 L14.51 16.09 L13.12 16.67 L13.13 18.50 L10.87 18.50 L10.88 16.67 L9.49 16.09 L8.20 17.40 L6.60 15.80 L7.91 14.51 L7.33 13.12 L5.50 13.13 L5.50 10.87 L7.33 10.88 L7.91 9.49 L6.60 8.20 L8.20 6.60 L9.49 7.91 L10.88 7.33z" fill="#f4f8ff"/><circle cx="12" cy="12" r="2.900" fill="#2860c8"/><circle cx="12" cy="12" r="1.200" fill="#f4f8ff"/></svg>
<svg style="left:651px;top:86px" width="24" height="24" viewBox="0 0 24 24"><rect x=".5" y=".5" width="23" height="23" rx="2" fill="url(#tile)" stroke="#4aa0e8" stroke-width="1"/><rect x="1.500" y="1.500" width="21" height="2.500" fill="#f4faff" opacity=".9"/><rect x="1" y="19" width="22" height="4.500" fill="#78d8f0"/><rect x="1.500" y="1.500" width="21" height="21" rx="2" fill="#4858d8"/><path d="M1.500 3.500a2 2 0 0 1 2-2h17a2 2 0 0 1 2 2v5L1.500 15z" fill="#7890e8"/><circle cx="12" cy="8.800" r="3.700" fill="#6878e0" stroke="#dce4ff" stroke-width="1.300"/><path d="M5 20c0-4.500 3.500-5.500 7-5.500s7 1 7 5.500z" fill="#6878e0" stroke="#dce4ff" stroke-width="1.300"/></svg>
<svg style="left:682px;top:86px" width="24" height="24" viewBox="0 0 24 24"><rect x=".5" y=".5" width="23" height="23" rx="2" fill="url(#tile)" stroke="#4aa0e8" stroke-width="1"/><rect x="1.500" y="1.500" width="21" height="2.500" fill="#f4faff" opacity=".9"/><rect x="1" y="19" width="22" height="4.500" fill="#78d8f0"/><circle cx="12" cy="12" r="9.800" fill="#2868e0"/><path d="M3 9a9.800 9.800 0 0 1 18 0z" fill="#4888e8" opacity=".7"/><path d="M7 7.500h10v10.500H7z" fill="#68b0f0"/><path d="M7 7.500h10v3H7z" fill="#90c8f8"/><path d="M12 12v4.500M9.800 14.500L12 17l2.200-2.500" fill="none" stroke="#fff" stroke-width="1.500"/></svg>
<svg style="left:422px;top:86px" width="24" height="24" viewBox="0 0 24 24"><rect x=".5" y=".5" width="23" height="23" rx="1.500" fill="url(#tileg)" stroke="#50b010" stroke-width="1"/><path d="M3 3v10" stroke="#e03010" stroke-width="1.600"/><circle cx="3" cy="3.500" r="1.800" fill="#f8b020"/><path d="M6 13l7-7 8 4v9l-9 4-6-3z" fill="#f8f0d0" stroke="#a09060" stroke-width=".6"/><path d="M5 13l8-8 9 5-2 1.500-7-3.500-6 6z" fill="#3068c8" stroke="#183880" stroke-width=".6"/><path d="M13 5l9 5v3l-9-5z" fill="#5890e0"/><rect x="9" y="15" width="3" height="6" fill="#f0a020"/><rect x="15" y="9" width="3" height="3.500" fill="#183880"/></svg>
<svg style="left:453px;top:86px" width="24" height="24" viewBox="0 0 24 24"><rect x=".5" y=".5" width="23" height="23" rx="1.500" fill="#8c9c84" stroke="#849478" stroke-width="1"/><rect x="1" y="1" width="22" height="3" fill="#98a08c"/><path d="M5 6l5-3M9 4v3" stroke="#7a9078" stroke-width="1"/><rect x="11" y="6" width="3.500" height="14" fill="#7888a0" stroke="#687890" stroke-width=".6"/><path d="M11 9h3.500M11 12h3.500M11 15h3.500" stroke="#98a8b8" stroke-width=".8"/><ellipse cx="11" cy="18" rx="6" ry="3" fill="none" stroke="#a08878" stroke-width="1"/></svg>
<svg style="left:736px;top:89px" width="24" height="24" viewBox="0 0 24 24"><path d="M.5 7h8l5-5h5l2 5h2v10H.5z" fill="#9c9c9c" stroke="#888" stroke-width=".6"/><path d="M8.500 7l5-5h5l-6 13H5z" fill="#888888"/><path d="M5 15L13.500 2M12.500 15l6-13M.5 15h12l6-8" fill="none" stroke="#6890a0" stroke-width=".9"/><path d="M18.500 7v10" stroke="#787878" stroke-width=".8"/></svg>
<svg style="left:766px;top:89px" width="24" height="24" viewBox="0 0 24 24"><path d="M.5 6.500l4 2 7-5.500h6l2 4 4-1.500-2 10-8 5H7z" fill="#989898" stroke="#787878" stroke-width=".6"/><path d="M4.500 8.500L8 18l6 0 5.500-11" fill="none" stroke="#6890a0" stroke-width="1"/><path d="M11.500 3L6 12l2 6M17.500 3L12 13l2 5" fill="none" stroke="#707878" stroke-width=".9"/><path d="M.5 6.500L7 20M23.500 5.500l-8 15" stroke="#6890a0" stroke-width=".8"/></svg>
<svg style="left:797px;top:86px" width="24" height="24" viewBox="0 0 24 24"><path d="M1 2h7M2 6.500h4M2 16.500h4M1 21h7" stroke="#808080" stroke-width="1.700"/><rect x="2" y="10" width="4.500" height="3.500" fill="#808080"/><path d="M8 11.500l6-1.500c3-1 6 0 9 1v6.500h-9.500c-2 0-2.500-2.500-.5-3.500H8z" fill="#a89c80" stroke="#908468" stroke-width=".5"/><rect x="20.500" y="11" width="3.500" height="6.500" fill="#587898"/></svg>
<svg style="left:851px;top:87px" width="24" height="24" viewBox="0 0 24 24"><rect x="10" y="2" width="12" height="12" fill="none" stroke="#a07060" stroke-width="1.200"/><rect x="12.500" y="4.500" width="7" height="7" fill="#c0c8c0" stroke="#90a090" stroke-width=".6" stroke-dasharray="1 1"/><rect x="2" y="10" width="12" height="12" fill="#d8dcd0" stroke="#707070" stroke-width="1.200"/><rect x="5" y="13" width="6" height="6" fill="#b09080"/><g fill="#707070"><rect x="8.500" y=".5" width="3" height="3"/><rect x="20.500" y=".5" width="3" height="3"/><rect x="20.500" y="12.500" width="3" height="3"/><rect x=".5" y="8.500" width="3" height="3"/><rect x="12.500" y="8.500" width="3" height="3"/><rect x=".5" y="20.500" width="3" height="3"/><rect x="12.500" y="20.500" width="3" height="3"/></g></svg>
<svg style="left:882px;top:87px" width="24" height="24" viewBox="0 0 24 24"><g fill="#909898" stroke="#687070" stroke-width=".7"><path d="M1 17l11-4 11 3-11 5z"/><path d="M1 14l11-4 11 3-11 5z"/><path d="M1 11l11-4 11 3-11 5z"/><path d="M1 8l11-4 11 3-11 5z"/><path d="M1 5l11-4 11 3-11 5z"/></g><circle cx="12" cy="8" r="1.500" fill="#687070"/></svg>
<svg style="left:913px;top:87px" width="24" height="24" viewBox="0 0 24 24"><g fill="#909898" stroke="#687070" stroke-width=".7"><path d="M1 16l9-4 9 3-9 5z"/><path d="M1 13l9-4 9 3-9 5z"/><path d="M1 10l9-4 9 3-9 5z"/><path d="M1 7l9-4 9 3-9 5z"/></g><rect x="10" y="8" width="12" height="14" fill="#a0a8b0" stroke="#6878a0" stroke-width="1"/><path d="M12 11h1.500M12 14.500h1.500M12 18h1.500" stroke="#505868" stroke-width="1.500"/><path d="M15 11h5M15 14.500h5M15 18h5" stroke="#707888" stroke-width="1.100"/></svg>
<svg style="left:950px;top:86px" width="24" height="24" viewBox="0 0 24 24"><g opacity=".8"><path d="M2 8l13-4 6 5 1 6-14 5z" fill="#a89878" stroke="#887858" stroke-width=".8"/><path d="M5 10l10-3M5 13l11-3M6 16l11-3" stroke="#807050" stroke-width=".9"/><ellipse cx="20.500" cy="12" rx="2.500" ry="4.500" fill="none" stroke="#a8a8a8" stroke-width="1.100"/></g></svg>
<svg style="left:986px;top:87px" width="24" height="24" viewBox="0 0 24 24"><g opacity=".8"><path d="M9 3l7-2 5 2v8l-6 3-6-2z" fill="#6880b8" stroke="#506090" stroke-width=".6"/><path d="M9 3l6 2v9" fill="none" stroke="#8898c8" stroke-width=".8"/><path d="M11 12l10 2 2 3-7 4-9-3z" fill="#5870a8" stroke="#405080" stroke-width=".6"/><path d="M2 15l3 5 7-12" fill="none" stroke="#808878" stroke-width="2.400"/></g></svg>
<svg style="left:1017px;top:87px" width="24" height="24" viewBox="0 0 24 24"><g opacity=".8"><path d="M8 6l9-5 6 4-6 6 3 3-3 3-10-6z" fill="#8890a0" stroke="#606878" stroke-width=".7"/><path d="M4 14l6 4-3 5H3z" fill="#a08868" stroke="#786848" stroke-width=".6"/><path d="M14 15l8 5-2 3-8-5z" fill="#a08868" stroke="#786848" stroke-width=".6"/><path d="M2 15l3 5 7-12" fill="none" stroke="#808878" stroke-width="2.400"/></g></svg>
<svg style="left:1048px;top:87px" width="24" height="24" viewBox="0 0 24 24"><g opacity=".8"><path d="M6 5l8-3 9 3v12l-9 5-8-4z" fill="#a88878" stroke="#806858" stroke-width=".7"/><path d="M14 8l9-3M14 8v14" stroke="#806858" stroke-width=".8"/><path d="M6 5l8 3v14l-8-4z" fill="#7080b0" stroke="#506090" stroke-width=".7"/><path d="M1 15l3 5 8-12" fill="none" stroke="#808878" stroke-width="2.400"/></g></svg>
<svg style="left:1085px;top:87px" width="24" height="24" viewBox="0 0 24 24"><g opacity=".8"><path d="M2 6l7-4 8 3v8l-7 4-8-3z" fill="#a89078" stroke="#887058" stroke-width=".7"/><path d="M2 6l8 3 7-4M10 9v8" stroke="#887058" stroke-width=".8" fill="none"/><path d="M11 17l10-11 2 2-10 11z" fill="#808878" stroke="#606858" stroke-width=".6"/><rect x="1" y="15" width="15" height="7.500" fill="#989898" stroke="#787878" stroke-width=".8"/><path d="M3 21l1.500-4.500L6 21M4 19.500h1.500M7.500 16.500v4.500h2c1.500-1-.5-2.200 0-2.200 1-1-0-2.300-2-2.300M14 17.500c-2.500-1.500-3.500 4 0 3" fill="none" stroke="#d8d8d8" stroke-width=".9"/><path d="M18 15l5 3.500-5 3.500z" fill="#a878a0"/></g></svg>
<svg style="left:1139px;top:86px" width="24" height="24" viewBox="0 0 24 24"><rect x="2" y="8" width="10" height="10" rx="1" fill="#e8ecff" stroke="#2838a8" stroke-width="1.200"/><path d="M4 10.500h1M6.500 10.500h1M9 10.500h1M4 13h1M6.500 13h1M9 13h1M4 15.500h1M6.500 15.500h1" stroke="#2838a8" stroke-width="1.100"/><rect x="8" y="13" width="13" height="10" rx="1" fill="#f0f2ff" stroke="#2838a8" stroke-width="1.200"/><path d="M10 16h9M10 18h9M10 20h9" stroke="#2838a8" stroke-width="1.100" stroke-dasharray="1.200 1"/><g transform="translate(16 7) scale(0.95)"><path d="M0 -7.500L.9 -1.800 4.800 -4.800 1.800 -.900 7.500 0 1.800 .900 4.800 4.800 .900 1.800 0 7.500 -.900 1.800 -4.800 4.800 -1.800 .900 -7.500 0 -1.800 -.900 -4.800 -4.800 -.900 -1.800z" fill="#8098b8"/><path d="M0 -6L1.300 -2.200 4 -4 2.200 -1.300 6 0 2.200 1.300 4 4 1.300 2.200 0 6 -1.300 2.200 -4 4 -2.200 1.300 -6 0 -2.200 -1.300 -4 -4 -1.300 -2.200z" fill="#f8f028"/><circle r="2.300" fill="#fcf860"/></g></svg>
<svg style="left:1170px;top:86px" width="24" height="24" viewBox="0 0 24 24"><rect x="14" y="2" width="8" height="13" fill="#181818"/><rect x="19" y="2" width="3" height="13" fill="#707880"/><path d="M13 12h9v8h-9z" fill="#f0c030" stroke="#a07810" stroke-width=".6"/><rect x="15.500" y="14" width="3" height="3" fill="#c02010"/><rect x="3" y="9" width="6" height="14" rx="2.500" fill="#3050c8" stroke="#101870" stroke-width=".7"/><path d="M3.500 13l5 3M3.500 17l5 3" stroke="#c0d4ff" stroke-width="1.500"/><g transform="translate(7 6) scale(0.95)"><path d="M0 -7.500L.9 -1.800 4.800 -4.800 1.800 -.900 7.500 0 1.800 .900 4.800 4.800 .900 1.800 0 7.500 -.900 1.800 -4.800 4.800 -1.800 .900 -7.500 0 -1.800 -.900 -4.800 -4.800 -.900 -1.800z" fill="#8098b8"/><path d="M0 -6L1.300 -2.200 4 -4 2.200 -1.300 6 0 2.200 1.300 4 4 1.300 2.200 0 6 -1.300 2.200 -4 4 -2.200 1.300 -6 0 -2.200 -1.300 -4 -4 -1.300 -2.200z" fill="#f8f028"/><circle r="2.300" fill="#fcf860"/></g></svg>
<svg style="left:1200px;top:86px" width="24" height="24" viewBox="0 0 24 24"><path d="M8 9l9-3 6 2v10l-9 5-6-3z" fill="#4858e0" stroke="#2030a0" stroke-width=".8"/><path d="M8 9l9-3 6 2-9 4z" fill="#c0d0ff"/><path d="M8 9l6 3v11l-6-3z" fill="#90a8f8"/><circle cx="5" cy="18" r="3.800" fill="#f8c020" stroke="#e01010" stroke-width="1.200"/><circle cx="10" cy="16.500" r="2.800" fill="#f8a020" stroke="#e01010" stroke-width="1"/><g transform="translate(8 6) scale(0.95)"><path d="M0 -7.500L.9 -1.800 4.800 -4.800 1.800 -.900 7.500 0 1.800 .900 4.800 4.800 .900 1.800 0 7.500 -.900 1.800 -4.800 4.800 -1.800 .900 -7.500 0 -1.800 -.900 -4.800 -4.800 -.900 -1.800z" fill="#8098b8"/><path d="M0 -6L1.300 -2.200 4 -4 2.200 -1.300 6 0 2.200 1.300 4 4 1.300 2.200 0 6 -1.300 2.200 -4 4 -2.200 1.300 -6 0 -2.200 -1.300 -4 -4 -1.300 -2.200z" fill="#f8f028"/><circle r="2.300" fill="#fcf860"/></g></svg>
<svg style="left:1232px;top:86px" width="24" height="24" viewBox="0 0 24 24"><path d="M2 11c1.700 3 3.300 3 5 0 1.700 3 3.300 3 5 0 1.700 3 3.300 3 5 0 1.700 3 3.300 3 5 0v5.500H2z" fill="#f4f8ff" stroke="#184890" stroke-width="1.300"/><path d="M2 17.500h20V23H2z" fill="#f4f8ff" stroke="#184890" stroke-width="1.300"/><path d="M3 18c1.500 2.500 3 2.500 4.500 0 1.500 2.500 3 2.500 4.500 0 1.500 2.500 3 2.500 4.500 0 1.500 2.500 3 2.500 4.500 0" fill="none" stroke="#184890" stroke-width="1.200"/><g transform="translate(8 6) scale(0.95)"><path d="M0 -7.500L.9 -1.800 4.800 -4.800 1.800 -.900 7.500 0 1.800 .900 4.800 4.800 .900 1.800 0 7.500 -.900 1.800 -4.800 4.800 -1.800 .900 -7.500 0 -1.800 -.900 -4.800 -4.800 -.900 -1.800z" fill="#8098b8"/><path d="M0 -6L1.300 -2.200 4 -4 2.200 -1.300 6 0 2.200 1.300 4 4 1.300 2.200 0 6 -1.300 2.200 -4 4 -2.200 1.300 -6 0 -2.200 -1.300 -4 -4 -1.300 -2.200z" fill="#f8f028"/><circle r="2.300" fill="#fcf860"/></g></svg>
<svg style="left:1263px;top:86px" width="24" height="24" viewBox="0 0 24 24"><rect x="3" y="9" width="6" height="14" rx="2.500" fill="#3048c8" stroke="#101870" stroke-width=".7"/><path d="M3.500 12l5 3M3.500 16l5 3M3.500 20l4 2" stroke="#a8c0ff" stroke-width="1.300"/><path d="M10 11h12M10 13.500h10M10 16h8M10 18.500h5" stroke="#383878" stroke-width="1.200"/><path d="M2 14l8-1" stroke="#383878" stroke-width="1"/><g transform="translate(10 5.5) scale(0.95)"><path d="M0 -7.500L.9 -1.800 4.800 -4.800 1.800 -.900 7.500 0 1.800 .900 4.800 4.800 .900 1.800 0 7.500 -.900 1.800 -4.800 4.800 -1.800 .900 -7.500 0 -1.800 -.900 -4.800 -4.800 -.900 -1.800z" fill="#8098b8"/><path d="M0 -6L1.300 -2.200 4 -4 2.200 -1.300 6 0 2.200 1.300 4 4 1.300 2.200 0 6 -1.300 2.200 -4 4 -2.200 1.300 -6 0 -2.200 -1.300 -4 -4 -1.300 -2.200z" fill="#f8f028"/><circle r="2.300" fill="#fcf860"/></g></svg>
<div class="a arr" style="left:711.5px;top:102px"></div>
<div class="a arr" style="left:826.5px;top:102px"></div>
<div class="a arr" style="left:1114.5px;top:102px"></div>
<div class="a arr" style="left:1291.5px;top:102px"></div>
<div class="a sep" style="left:192px;top:84px;height:27px"></div>
<div class="a sep" style="left:415px;top:84px;height:27px"></div>
<div class="a sep" style="left:483px;top:84px;height:27px"></div>
<div class="a sep" style="left:613px;top:84px;height:27px"></div>
<div class="a sep" style="left:722px;top:84px;height:27px"></div>
<div class="a sep" style="left:838px;top:84px;height:27px"></div>
<div class="a sep" style="left:942px;top:84px;height:27px"></div>
<div class="a sep" style="left:979px;top:84px;height:27px"></div>
<div class="a sep" style="left:1078px;top:84px;height:27px"></div>
<div class="a sep" style="left:1126px;top:84px;height:27px"></div>
<div class="a grip" style="left:1px;top:87px;height:22px"></div>
<div class="a grip" style="left:728px;top:87px;height:22px"></div>
<div class="a grip" style="left:844px;top:87px;height:22px"></div>
<div class="a grip" style="left:1132px;top:87px;height:22px"></div>
<div class="a combo" style="left:2px;width:146px;padding-left:1px">无选择过滤器<i></i></div>
<div class="a combo" style="left:156px;width:155px;padding-left:1px">整个装配<i></i></div>
<svg style="left:319px;top:122px" width="16" height="16" viewBox="0 0 18 18"><path d="M4 2v15M1 6h9M2 11l7 3v-7z" fill="#a0a8a0" stroke="#889088" stroke-width="1"/><circle cx="12" cy="5" r="3" fill="none" stroke="#a09080" stroke-width="1.600"/><circle cx="13" cy="10" r="3" fill="none" stroke="#a09080" stroke-width="1.600"/></svg>
<svg style="left:348px;top:122px" width="16" height="16" viewBox="0 0 18 18"><path d="M1 5l4-3v2h5v2H5v2z" fill="#8898a8"/><path d="M6 8h11l-4 5v4h-3v-4z" fill="#a0a098" stroke="#888880" stroke-width=".6"/></svg>
<svg style="left:368px;top:122px" width="16" height="16" viewBox="0 0 18 18"><rect x=".8" y=".8" width="16.400" height="16.400" fill="#e4e9dc" stroke="#d01010" stroke-width="1.400"/><circle cx="6" cy="6" r="2.600" fill="none" stroke="#101010" stroke-width="1.200"/><path d="M6 1.500v9M1.500 6h9" stroke="#101010" stroke-width="1.100"/><path d="M9 10h7l-2.500 3v3h-2v-3z" fill="#f8b020" stroke="#e08010" stroke-width=".5"/></svg>
<svg style="left:402px;top:122px" width="16" height="16" viewBox="0 0 18 18"><path d="M2 6c0-4 5-5 7-2" fill="none" stroke="#1838a8" stroke-width="1.800"/><path d="M0 4l2.500 4 2.500-3z" fill="#1838a8"/><circle cx="11" cy="11.500" r="3.600" fill="none" stroke="#e01010" stroke-width="1.500"/><path d="M11 5.500v12M5 11.500h12" stroke="#101010" stroke-width="1.200"/></svg>
<svg style="left:425px;top:122px" width="16" height="16" viewBox="0 0 18 18"><path d="M1 3c3-3 5 1 8-1" fill="none" stroke="#283888" stroke-width="2.200"/><path d="M3 5l3-3 3 4z" fill="#506090"/><path d="M11 6v10h3M11 10h3" fill="none" stroke="#3048b0" stroke-width="1.200"/><rect x="9.500" y="5" width="3.500" height="3.500" fill="#f8d850" stroke="#b08810" stroke-width=".7"/><rect x="13.500" y="8.500" width="3.500" height="3.500" fill="#f8d850" stroke="#b08810" stroke-width=".7"/><rect x="13.500" y="14" width="3.500" height="3.500" fill="#f8d850" stroke="#b08810" stroke-width=".7"/></svg>
<svg style="left:454px;top:122px" width="16" height="16" viewBox="0 0 18 18"><path d="M5 1.500h8l4 7.500-4 7.500H5L1 9z" fill="none" stroke="#101010" stroke-width="1.500"/><circle cx="9" cy="9" r="1.700" fill="#e01010"/></svg>
<svg style="left:477px;top:122px" width="16" height="16" viewBox="0 0 18 18"><rect x="2" y="2" width="14" height="14" fill="none" stroke="#101010" stroke-width="1.400" stroke-dasharray="3 2"/><circle cx="2" cy="2" r="1.600" fill="#e01010"/><circle cx="16" cy="16" r="1.600" fill="#e01010"/></svg>
<svg style="left:518px;top:122px" width="16" height="16" viewBox="0 0 18 18"><path d="M1 11l6-9h8l3 4-2 9-5 2-10-2z" fill="#f4f6ff" stroke="#404860" stroke-width="1"/><path d="M7 2l3 4 8 0M10 6l-2 11M1 11l8 1" fill="none" stroke="#404860" stroke-width=".9"/><path d="M8 4l6 1" stroke="#e01010" stroke-width="1.800"/><path d="M3 11l5 1-1 4-4-1z" fill="#a8b8e8"/></svg>
<svg style="left:541px;top:122px" width="16" height="16" viewBox="0 0 18 18"><path d="M1 5l7-3 9 2v10l-8 3-8-3z" fill="#48b0f0" stroke="#2070c0" stroke-width=".7"/><path d="M1 5l7-3 9 2-8 3z" fill="#c8ecff"/><path d="M9 7l8-3v10l-8 3z" fill="#2890e0"/><path d="M5 .5v13l9 3M5 5l10-2" fill="none" stroke="#e03030" stroke-width=".9"/></svg>
<div class="a arr" style="left:389.5px;top:128px"></div>
<div class="a arr" style="left:499.5px;top:128px"></div>
<div class="a sep" style="left:341px;top:121px;height:22px"></div>
<div class="a sep" style="left:447px;top:121px;height:22px"></div>
<div class="a sep" style="left:511px;top:121px;height:22px"></div>
<div class="a arr" style="left:1349.5px;top:133px"></div>
<div id="left" class="a"></div>
<svg style="left:4px;top:154px" width="14" height="14" viewBox="0 0 18 18"><circle cx="9" cy="9" r="6" fill="none" stroke="#282828" stroke-width="1.600"/><g stroke="#282828" stroke-width="2.400"><path d="M9 0v3M9 15v3M0 9h3M15 9h3M2.600 2.600l2.200 2.200M13.200 13.200l2.200 2.200M2.600 15.400l2.200-2.200M13.200 4.800l2.200-2.200"/></g><circle cx="9" cy="9" r="1" fill="#282828"/></svg>
<div class="a" style="left:0;top:317px;width:28px;height:42px;background:#f3f3f3"></div>
<svg style="left:4px;top:322px" width="22" height="30" viewBox="0 0 22 30"><path d="M3 1v9" stroke="#2030c0" stroke-width="2.400"/><path d="M1 8l2 5 2-5z" fill="#2030c0"/><path d="M6 2h9M6 5h7M6 8h5" stroke="#2838c0" stroke-width="1.200"/><path d="M13 9h8" stroke="#101010" stroke-width="1.200"/><path d="M4 14v14M4 21h5" fill="none" stroke="#2030b0" stroke-width="1.300"/><path d="M10 17l5 0 3 6h-8z" fill="#e8ecff" stroke="#2030b0" stroke-width="1.100"/></svg>
<div class="a tab" style="top:192px;height:40px"></div>
<svg style="left:4px;top:199px" width="22" height="26" viewBox="0 0 24 28"><g transform="translate(0 0) scale(0.8)"><path d="M0 3l5-3 5 2v6l-5 3-5-2z" fill="#f0b828" stroke="#d89010" stroke-width=".8"/><path d="M0 3l5-3 5 2-5 3z" fill="#fff4b8"/><path d="M0 3l5 2v6l-5-2z" fill="#f8dc58"/><path d="M1 4.500l3 1.200v1.500l-3-1.200z" fill="#fffbe0"/></g><g transform="translate(4 5) scale(0.8)"><path d="M0 3l5-3 5 2v6l-5 3-5-2z" fill="#f0b828" stroke="#d89010" stroke-width=".8"/><path d="M0 3l5-3 5 2-5 3z" fill="#fff4b8"/><path d="M0 3l5 2v6l-5-2z" fill="#f8dc58"/><path d="M1 4.500l3 1.200v1.500l-3-1.200z" fill="#fffbe0"/></g><g transform="translate(12 14) scale(0.8)"><path d="M0 3l5-3 5 2v6l-5 3-5-2z" fill="#f0b828" stroke="#d89010" stroke-width=".8"/><path d="M0 3l5-3 5 2-5 3z" fill="#fff4b8"/><path d="M0 3l5 2v6l-5-2z" fill="#f8dc58"/><path d="M1 4.500l3 1.200v1.500l-3-1.200z" fill="#fffbe0"/></g><path d="M3 11v14M3 18h7M14 12h8" fill="none" stroke="#2030b0" stroke-width="1.300"/><path d="M14 12h8" stroke="#101010" stroke-width="1.200"/></svg>
<div class="a tab" style="top:234px;height:39.5px"></div>
<svg style="left:4px;top:241px" width="22" height="26" viewBox="0 0 24 28"><path d="M2 1l7 5L2 11zM20 1l-7 5 7 5z" fill="#1020e0"/><path d="M11 0v24" stroke="#101010" stroke-width="1.100" stroke-dasharray="2 1.200"/><rect x="0" y="14" width="8" height="8" fill="#f8e040" stroke="#806010" stroke-width="1"/><path d="M13 13l9 9h-9z" fill="#e01010" stroke="#801010" stroke-width=".6"/></svg>
<div class="a tab" style="top:275px;height:40.5px"></div>
<svg style="left:4px;top:282px" width="22" height="26" viewBox="0 0 24 28"><path d="M0 3v6c0 2 9 2 9 0V3z" fill="#e8c8e0" stroke="#802080" stroke-width="1"/><ellipse cx="4.500" cy="3" rx="4.500" ry="1.800" fill="#f8e8f4" stroke="#802080" stroke-width="1"/><path d="M4 12v14M4 20h6M12 9h9" fill="none" stroke="#2030b0" stroke-width="1.300"/><path d="M12 9h9" stroke="#101010" stroke-width="1.200"/><circle cx="15" cy="19" r="4" fill="#f8e8f4" stroke="#802080" stroke-width="1.200"/><circle cx="15" cy="19" r="1.500" fill="#802080"/></svg>
<div class="a tab" style="top:359px;height:40px"></div>
<svg style="left:4px;top:366px" width="22" height="26" viewBox="0 0 24 28"><path d="M1 8l14-7v14L1 22z" fill="#f4f4ff" stroke="#8040c0" stroke-width=".8"/><path d="M1 11.500l14-7M1 15l14-7M1 18.500l14-7M4.500 6.200v14M8 4.500v14M11.500 2.800v14" stroke="#f0a050" stroke-width=".9"/><path d="M1 8l14-7" stroke="#8040d0" stroke-width="1.600"/><path d="M7 14l8-3 8 2v6l-8 4-8-3z" fill="#3878e0" stroke="#1848a0" stroke-width=".6"/><path d="M7 14l8-3 8 2-8 3z" fill="#f8a030"/><path d="M9 16l5 1.500v3L9 19z" fill="#f08020"/></svg>
<div class="a tab" style="top:402px;height:39px"></div>
<svg style="left:4px;top:409px" width="22" height="26" viewBox="0 0 24 28"><path d="M9 9c0-4 3-6 6-5.500" fill="none" stroke="#f07020" stroke-width="1.800"/><path d="M7 7.500l2 4 3-3z" fill="#f07020"/><path d="M15 3l4-2 4 2v4.500l-4 2-4-2z" fill="#f8d030" stroke="#e01010" stroke-width="1.100"/><path d="M15 3l4 2 4-2M19 5v4.500" fill="none" stroke="#e01010" stroke-width=".9"/><path d="M1 11h7v12H1z" fill="#f0f0f0" stroke="#585858" stroke-width=".9"/><path d="M8 11l6-2v11l-6 3z" fill="#d0d0d8" stroke="#585858" stroke-width=".9"/><path d="M9.500 12.500l3-1v7l-3 1z" fill="#70a8e8"/><path d="M3 13h3v8H3z" fill="#c8d8e8"/><path d="M14 15h6v3l-3 5h-5" fill="none" stroke="#404040" stroke-width="1.300"/><path d="M1 23h14l2 2H1z" fill="#a0a0a0"/></svg>
<div class="a tab" style="top:443.5px;height:39px"></div>
<svg style="left:4px;top:450.5px" width="22" height="26" viewBox="0 0 24 28"><path d="M1 5l3-3h4l-3 3zM8 5l3-3h4l-3 3zM15 5l3-3h4l-3 3z" fill="#fff" stroke="#707070" stroke-width=".5"/><path d="M1 5h4.500v17H1z" fill="#f09020"/><path d="M5.500 5l3-3v16l-3 4z" fill="#c87010"/><path d="M8 5h4.500v17H8z" fill="#38c038"/><path d="M12.500 5l3-3v16l-3 4z" fill="#209020"/><path d="M15 5h4.500v17H15z" fill="#3890e8"/><path d="M19.500 5l3-3v16l-3 4z" fill="#1868c0"/><path d="M2 9h2.500M9 9h2.500M16 9h2.500M2 12h2.500M9 12h2.500M16 12h2.500" stroke="#fff" stroke-width=".8" opacity=".7"/></svg>
<div class="a tab" style="top:498px;height:38.5px"></div>
<svg style="left:4px;top:505px" width="22" height="26" viewBox="0 0 24 28"><path d="M10 2c7 0 12 5 12 12M10 6.500c4.500 0 7.500 3 7.500 7.500" fill="none" stroke="#2048c8" stroke-width="2.400"/><circle cx="8" cy="17" r="7.500" fill="#2878e8" stroke="#1048b0" stroke-width=".8"/><circle cx="6" cy="14" r="3" fill="#78b8ff" opacity=".7"/><rect x="6.800" y="15" width="2.600" height="6" fill="#fff"/><rect x="5.500" y="20" width="5.200" height="1.500" fill="#fff"/><circle cx="8" cy="12.200" r="1.600" fill="#fff"/></svg>
<div class="a tab" style="top:552px;height:39.5px"></div>
<svg style="left:4px;top:559px" width="22" height="26" viewBox="0 0 24 28"><path d="M2 1h11l6 6v15H2z" fill="#fff" stroke="#2040c0" stroke-width="1.500"/><path d="M13 1v6h6" fill="#d8e0f8" stroke="#2040c0" stroke-width="1.200"/><circle cx="10" cy="14" r="5.500" fill="#2878d8"/><path d="M6 12c2-2 4-1 4 1s2 2 1 5c-3 0-5-3-5-6z" fill="#48b848"/><path d="M12 10c2 0 3 2 3 4-2 0-3-2-3-4z" fill="#68c858"/></svg>
<div class="a sb" style="top:601px"></div>
<svg style="left:5px;top:601.5px" width="14" height="15" viewBox="0 0 14 15"><path d="M3.500 4h8" stroke="#a4a4a4" stroke-width="1.600"/><path d="M3 10.500h9L7.500 5.800z" fill="#a4a4a4"/></svg>
<div class="a sb" style="top:617px"></div>
<svg style="left:5px;top:617.5px" width="14" height="15" viewBox="0 0 14 15"><path d="M3 10h9L7.500 5z" fill="#a4a4a4"/></svg>
<div class="a sb" style="top:633px"></div>
<svg style="left:5px;top:633.5px" width="14" height="15" viewBox="0 0 14 15"><path d="M3 5.500h9L7.500 10.500z" fill="#484c68"/></svg>
<div class="a sb" style="top:649px"></div>
<svg style="left:5px;top:649.5px" width="14" height="15" viewBox="0 0 14 15"><path d="M3 4.500h9L7.500 9.200z" fill="#484c68"/><path d="M3.500 11h8" stroke="#484c68" stroke-width="1.600"/></svg>
<svg style="left:0;top:590px" width="26" height="12" viewBox="0 0 26 12"><path d="M0 5.500c4 2.500 8 2.500 12-.5s9-3 14-1" fill="none" stroke="#8a8462" stroke-width="1"/></svg>
<div id="nav" class="a"></div><div id="navt" class="a">工序导航器 - 程序顺序</div>
<svg style="left:293px;top:156px" width="14" height="13" viewBox="0 0 14 13"><rect x="1" y="1" width="12" height="10.500" fill="#fff" stroke="#101010" stroke-width="1.300"/><rect x="1" y="1" width="12" height="2" fill="#101010"/></svg>
<div id="tree" class="a">
<div class="a hd" style="left:1px;width:199px;padding-left:6px">名称</div><div class="a hd" style="left:200px;width:41px;padding-left:5px;border-left:1px solid #f8f8f8">换刀</div><div class="a hd" style="left:242px;width:35px;padding-left:4px;border-left:1px solid #f8f8f8">刀轨</div>
<div class="a" style="left:199px;top:2px;width:1px;height:17px;background:#b0b4ac"></div><div class="a" style="left:241px;top:2px;width:1px;height:17px;background:#b0b4ac"></div>
<div class="a row" style="top:20px;background:#fff"></div>
<div class="a row" style="top:40px;background:#f5f5f5"></div>
<div class="a row" style="top:60px;background:#fff"></div>
<div class="a row" style="top:80px;background:#f5f5f5"></div>
<div class="a row" style="top:100px;background:#fff"></div>
<div class="a row" style="top:120px;background:#f5f5f5"></div>
<div class="a row" style="top:140px;background:#fff"></div>
<div class="a row" style="top:160px;background:#f5f5f5"></div>
<div class="a row" style="top:180px;background:#fff"></div>
<div class="a row" style="top:200px;background:#f5f5f5"></div>
<div class="a row" style="top:220px;background:#fff"></div>
<div class="a row" style="top:240px;background:#f5f5f5"></div>
<div class="a row" style="top:260px;background:#fff"></div>
<div class="a row" style="top:280px;background:#f5f5f5"></div>
<div class="a row" style="top:300px;background:#fff"></div>
<div class="a row" style="top:320px;background:#f5f5f5"></div>
<div class="a row" style="top:340px;background:#fff"></div>
<div class="a row" style="top:360px;background:#f5f5f5"></div>
<div class="a row" style="top:380px;background:#fff"></div>
<div class="a row" style="top:400px;background:#f5f5f5"></div>
<div class="a" style="left:199px;top:20px;width:1px;height:386px;background:#000"></div><div class="a" style="left:241px;top:20px;width:1px;height:386px;background:#d2dccf"></div>
<div class="a" style="left:4px;top:22px;font-size:12px;letter-spacing:-.35px;line-height:16px;color:#202020">NC_PROGRAM</div>
<div class="a" style="left:38px;top:42px;font-size:12px;line-height:16px;color:#202020">未用项</div>
<div class="a" style="left:55px;top:62px;font-size:12px;letter-spacing:-.35px;line-height:16px;color:#202020">PROGRAM</div>
<div class="a" style="left:10px;top:50px;width:10px;height:21px;border-left:1px dotted #909090;border-top:1px dotted #909090;border-bottom:1px dotted #909090"></div>
<svg style="left:21px;top:43px" width="14" height="14" viewBox="0 0 14 14"><path d="M1 2h5l1 1.500h6V13H1z" fill="#f0d878" stroke="#a08820" stroke-width="1"/><path d="M1 5h12" stroke="#fcf4c0" stroke-width="1"/><path d="M10 6H6v2.500h4V11H6" fill="none" stroke="#2030b0" stroke-width="1.200"/></svg>
<svg style="left:22px;top:64px" width="14" height="13" viewBox="0 0 14 13"><path d="M1 7l4 5 8-11" fill="none" stroke="#18b828" stroke-width="2.600"/></svg>
<svg style="left:38px;top:63px" width="14" height="14" viewBox="0 0 14 14"><path d="M1 2h5l1 1.500h6V13H1z" fill="#f0d878" stroke="#a08820" stroke-width="1"/><path d="M1 5h12" stroke="#fcf4c0" stroke-width="1"/><path d="M10 6H6v2.500h4V11H6" fill="none" stroke="#2030b0" stroke-width="1.200"/></svg>
<div class="a" style="left:1px;top:406px;width:275px;height:18px;background:#f3f3f3"></div><div class="a" style="left:18px;top:407px;width:100px;height:15px;background:#c1c1c1"></div>
<svg style="left:5px;top:410px" width="8" height="10" viewBox="0 0 8 10"><path d="M6 1L2 5l4 4" fill="none" stroke="#604848" stroke-width="1.800"/></svg>
<svg style="left:263px;top:410px" width="8" height="10" viewBox="0 0 8 10"><path d="M2 1l4 4-4 4" fill="none" stroke="#604848" stroke-width="1.800"/></svg>
</div>
<div class="a" style="left:35px;top:608px;width:107px;height:1px;background:#c8c8c8"></div><div class="a" style="left:202px;top:608px;width:109px;height:1px;background:#c8c8c8"></div><div class="a" style="left:148px;top:605px;width:50px;height:6px;background:#d7decf;border:1px solid #c0c4bc"></div>
<div class="a sect" style="top:615.5px">相依性</div>
<div class="a" style="left:288px;top:616.5px;width:1px;height:20px;background:#b0b0ac"></div>
<svg style="left:292px;top:620.5px" width="14" height="12" viewBox="0 0 14 12"><path d="M2 2l5 8 5-8" fill="none" stroke="#5c4848" stroke-width="2.400"/></svg>
<div class="a sect" style="top:639px">细节</div>
<div class="a" style="left:288px;top:640px;width:1px;height:20px;background:#b0b0ac"></div>
<svg style="left:292px;top:644px" width="14" height="12" viewBox="0 0 14 12"><path d="M2 2l5 8 5-8" fill="none" stroke="#5c4848" stroke-width="2.400"/></svg>
<div id="view" class="a"><svg style="left:-323px;top:-147px" width="1360" height="720" viewBox="0 0 1360 720" shape-rendering="crispEdges"><defs><linearGradient id="hg" x1="0" x2="1" y1="0" y2="0">
<stop offset="0" stop-color="#b8a4c8"/><stop offset=".05" stop-color="#b8a4c8"/>
<stop offset=".05" stop-color="#a8a4ac"/><stop offset=".12" stop-color="#a4a4a8"/>
<stop offset=".12" stop-color="#9c9ca0"/><stop offset=".22" stop-color="#9c9ca0"/>
<stop offset=".22" stop-color="#7894a0"/><stop offset=".34" stop-color="#7894a0"/>
<stop offset=".34" stop-color="#888888"/><stop offset=".45" stop-color="#848484"/>
<stop offset=".45" stop-color="#808080"/><stop offset=".72" stop-color="#808080"/>
<stop offset=".72" stop-color="#888888"/><stop offset=".82" stop-color="#888888"/>
<stop offset=".82" stop-color="#7894a0"/><stop offset="1" stop-color="#7894a0"/>
</linearGradient></defs><polygon points="1035.5,590.5 1227,382 1227,403.5 1036,611.5" fill="#b09cc0"/>
<polygon points="343.0,387.3 1027.5,591.3 1035.5,590.5 1035.5,612.0 1028.0,616.0 832.5,556.7 832.5,548.7 785.5,535.6 785.5,542.6 584.5,482.1 584.5,474.1 538.0,461.1 538.0,468.1 343.0,409.5" fill="#808080" stroke="#2f4a50" stroke-width="1"/>
<polygon points="539.5,462.1 545.0,464.1 540.0,468.6" fill="#c0a8d0" stroke="#2f4a50" stroke-width=".6"/>
<polygon points="787.0,536.6 792.5,538.6 787.5,543.1" fill="#c0a8d0" stroke="#2f4a50" stroke-width=".6"/>
<polygon points="1027.5,591.3 1035.5,590.5 1035.5,612 1028,616" fill="#858585" stroke="#2f4a50" stroke-width="1"/>
<polygon points="538,168.5 1221.5,373.5 1227.5,380 1227.5,382.5 1035.8,590.5 1027.5,591.5 342.5,387.3 341.2,381.5" fill="#ffffff"/>
<polyline points="343.5,380 1030,584 1221,374" fill="none" stroke="#1f3438" stroke-width="1"/>
<polyline points="1030,584 1027.5,591.3" fill="none" stroke="#1f3438" stroke-width="1"/>
<polyline points="1030,584 1035.5,590.5" fill="none" stroke="#1f3438" stroke-width="1"/>
<polyline points="538,169 341.5,381.5 342,409.5" fill="none" stroke="#8fa8b8" stroke-width="2"/>
<polyline points="537,169 340.8,381.5 341,409.5" fill="none" stroke="#2f4a50" stroke-width=".7"/>
<polyline points="1221.5,373.5 1227.5,380" fill="none" stroke="#1f3438" stroke-width="1"/>
<polyline points="1036,590.5 1227,382.5" fill="none" stroke="#1f3438" stroke-width=".8"/>
<ellipse cx="677.50" cy="297.00" rx="43.20" ry="24.60" fill="#ffffff" stroke="#1f3438" stroke-width="1"/>
<ellipse cx="677.50" cy="298.60" rx="41.60" ry="23.20" fill="url(#hg)" stroke="#1f3438" stroke-width="1"/>
<clipPath id="c2"><ellipse cx="677.50" cy="298.60" rx="41.1" ry="22.7"/></clipPath>
<ellipse cx="677.50" cy="328.10" rx="41.6" ry="23.2" fill="#000" stroke="#1f3438" stroke-width="1" clip-path="url(#c2)"/>
<ellipse cx="829.00" cy="327.20" rx="43.20" ry="24.60" fill="#ffffff" stroke="#1f3438" stroke-width="1"/>
<ellipse cx="829.00" cy="328.80" rx="41.60" ry="23.20" fill="url(#hg)" stroke="#1f3438" stroke-width="1"/>
<clipPath id="c6"><ellipse cx="829.00" cy="328.80" rx="41.1" ry="22.7"/></clipPath>
<ellipse cx="829.00" cy="358.30" rx="41.6" ry="23.2" fill="#000" stroke="#1f3438" stroke-width="1" clip-path="url(#c6)"/>
<ellipse cx="609.00" cy="371.50" rx="43.20" ry="24.60" fill="#ffffff" stroke="#1f3438" stroke-width="1"/>
<ellipse cx="609.00" cy="373.10" rx="41.60" ry="23.20" fill="url(#hg)" stroke="#1f3438" stroke-width="1"/>
<clipPath id="c10"><ellipse cx="609.00" cy="373.10" rx="41.1" ry="22.7"/></clipPath>
<ellipse cx="609.00" cy="402.60" rx="41.6" ry="23.2" fill="#000" stroke="#1f3438" stroke-width="1" clip-path="url(#c10)"/>
<ellipse cx="739.00" cy="425.60" rx="43.20" ry="24.60" fill="#ffffff" stroke="#1f3438" stroke-width="1"/>
<ellipse cx="739.00" cy="427.20" rx="41.60" ry="23.20" fill="url(#hg)" stroke="#1f3438" stroke-width="1"/>
<clipPath id="c14"><ellipse cx="739.00" cy="427.20" rx="41.1" ry="22.7"/></clipPath>
<ellipse cx="739.00" cy="456.70" rx="41.6" ry="23.2" fill="#000" stroke="#1f3438" stroke-width="1" clip-path="url(#c14)"/>
<ellipse cx="958.90" cy="381.10" rx="43.20" ry="24.60" fill="#ffffff" stroke="#1f3438" stroke-width="1"/>
<ellipse cx="958.90" cy="382.70" rx="41.60" ry="23.20" fill="url(#hg)" stroke="#1f3438" stroke-width="1"/>
<clipPath id="c18"><ellipse cx="958.90" cy="382.70" rx="41.1" ry="22.7"/></clipPath>
<ellipse cx="958.90" cy="412.20" rx="41.6" ry="23.2" fill="#000" stroke="#1f3438" stroke-width="1" clip-path="url(#c18)"/>
<ellipse cx="890.50" cy="456.30" rx="43.20" ry="24.60" fill="#ffffff" stroke="#1f3438" stroke-width="1"/>
<ellipse cx="890.50" cy="457.90" rx="41.60" ry="23.20" fill="url(#hg)" stroke="#1f3438" stroke-width="1"/>
<clipPath id="c22"><ellipse cx="890.50" cy="457.90" rx="41.1" ry="22.7"/></clipPath>
<ellipse cx="890.50" cy="487.40" rx="41.6" ry="23.2" fill="#000" stroke="#1f3438" stroke-width="1" clip-path="url(#c22)"/>
<ellipse cx="633.50" cy="228.40" rx="29.60" ry="17.00" fill="url(#hg)" stroke="#1f3438" stroke-width="1"/>
<ellipse cx="486.25" cy="389.75" rx="29.60" ry="17.00" fill="url(#hg)" stroke="#1f3438" stroke-width="1"/>
<ellipse cx="1082.10" cy="362.90" rx="29.60" ry="17.00" fill="url(#hg)" stroke="#1f3438" stroke-width="1"/>
<ellipse cx="934.50" cy="524.20" rx="29.60" ry="17.00" fill="url(#hg)" stroke="#1f3438" stroke-width="1"/>
<ellipse cx="562.25" cy="206.90" rx="24.80" ry="14.30" fill="url(#hg)" stroke="#1f3438" stroke-width="1"/>
<clipPath id="c29"><ellipse cx="562.25" cy="206.90" rx="24.3" ry="13.8"/></clipPath>
<ellipse cx="562.25" cy="223.40" rx="21.5" ry="12.2" fill="url(#hg)" stroke="#1f3438" stroke-width="1" clip-path="url(#c29)"/>
<ellipse cx="415.00" cy="368.10" rx="24.80" ry="14.30" fill="url(#hg)" stroke="#1f3438" stroke-width="1"/>
<clipPath id="c32"><ellipse cx="415.00" cy="368.10" rx="24.3" ry="13.8"/></clipPath>
<ellipse cx="415.00" cy="384.60" rx="21.5" ry="12.2" fill="url(#hg)" stroke="#1f3438" stroke-width="1" clip-path="url(#c32)"/>
<ellipse cx="1153.00" cy="384.40" rx="24.80" ry="14.30" fill="url(#hg)" stroke="#1f3438" stroke-width="1"/>
<clipPath id="c35"><ellipse cx="1153.00" cy="384.40" rx="24.3" ry="13.8"/></clipPath>
<ellipse cx="1153.00" cy="400.90" rx="21.5" ry="12.2" fill="url(#hg)" stroke="#1f3438" stroke-width="1" clip-path="url(#c35)"/>
<ellipse cx="1005.75" cy="546.00" rx="24.80" ry="14.30" fill="url(#hg)" stroke="#1f3438" stroke-width="1"/>
<clipPath id="c38"><ellipse cx="1005.75" cy="546.00" rx="24.3" ry="13.8"/></clipPath>
<ellipse cx="1005.75" cy="562.50" rx="21.5" ry="12.2" fill="url(#hg)" stroke="#1f3438" stroke-width="1" clip-path="url(#c38)"/>
<ellipse cx="545.40" cy="181.80" rx="10.00" ry="5.80" fill="url(#hg)" stroke="#1f3438" stroke-width="1"/>
<ellipse cx="369.10" cy="374.90" rx="10.00" ry="5.80" fill="url(#hg)" stroke="#1f3438" stroke-width="1"/>
<ellipse cx="1198.90" cy="378.10" rx="10.00" ry="5.80" fill="url(#hg)" stroke="#1f3438" stroke-width="1"/>
<ellipse cx="1023.10" cy="570.80" rx="10.00" ry="5.80" fill="url(#hg)" stroke="#1f3438" stroke-width="1"/>
<ellipse cx="872.00" cy="280.00" rx="10.00" ry="5.80" fill="url(#hg)" stroke="#1f3438" stroke-width="1"/>
<ellipse cx="695.75" cy="472.75" rx="10.00" ry="5.80" fill="url(#hg)" stroke="#1f3438" stroke-width="1"/>
<ellipse cx="748.00" cy="298.25" rx="11.10" ry="6.60" fill="url(#hg)" stroke="#1f3438" stroke-width="1"/>
<ellipse cx="712.00" cy="325.75" rx="11.10" ry="6.60" fill="url(#hg)" stroke="#1f3438" stroke-width="1"/>
<ellipse cx="670.50" cy="371.25" rx="11.10" ry="6.60" fill="url(#hg)" stroke="#1f3438" stroke-width="1"/>
<ellipse cx="916.25" cy="348.75" rx="11.10" ry="6.60" fill="url(#hg)" stroke="#1f3438" stroke-width="1"/>
<ellipse cx="897.25" cy="381.25" rx="11.10" ry="6.60" fill="url(#hg)" stroke="#1f3438" stroke-width="1"/>
<ellipse cx="651.25" cy="404.00" rx="11.10" ry="6.60" fill="url(#hg)" stroke="#1f3438" stroke-width="1"/>
<ellipse cx="855.75" cy="426.75" rx="11.10" ry="6.60" fill="url(#hg)" stroke="#1f3438" stroke-width="1"/>
<ellipse cx="820.00" cy="454.25" rx="11.10" ry="6.60" fill="url(#hg)" stroke="#1f3438" stroke-width="1"/>
<ellipse cx="803.75" cy="354.75" rx="7.10" ry="4.30" fill="url(#hg)" stroke="#1f3438" stroke-width="1"/>
<ellipse cx="784.00" cy="376.25" rx="7.10" ry="4.30" fill="url(#hg)" stroke="#1f3438" stroke-width="1"/>
<ellipse cx="764.25" cy="397.75" rx="7.10" ry="4.30" fill="url(#hg)" stroke="#1f3438" stroke-width="1"/>
<ellipse cx="743.75" cy="284.25" rx="4.30" ry="2.50" fill="#848888" stroke="#1f3438" stroke-width="1"/>
<ellipse cx="774.25" cy="306.00" rx="4.30" ry="2.50" fill="#848888" stroke="#1f3438" stroke-width="1"/>
<ellipse cx="684.75" cy="330.75" rx="4.30" ry="2.50" fill="#848888" stroke="#1f3438" stroke-width="1"/>
<ellipse cx="724.75" cy="342.75" rx="4.30" ry="2.50" fill="#848888" stroke="#1f3438" stroke-width="1"/>
<ellipse cx="662.25" cy="355.25" rx="4.30" ry="2.50" fill="#848888" stroke="#1f3438" stroke-width="1"/>
<ellipse cx="702.25" cy="367.50" rx="4.30" ry="2.50" fill="#848888" stroke="#1f3438" stroke-width="1"/>
<ellipse cx="890.25" cy="341.00" rx="4.30" ry="2.50" fill="#848888" stroke="#1f3438" stroke-width="1"/>
<ellipse cx="937.50" cy="342.75" rx="4.30" ry="2.50" fill="#848888" stroke="#1f3438" stroke-width="1"/>
<ellipse cx="865.50" cy="385.25" rx="4.30" ry="2.50" fill="#848888" stroke="#1f3438" stroke-width="1"/>
<ellipse cx="905.50" cy="397.25" rx="4.30" ry="2.50" fill="#848888" stroke="#1f3438" stroke-width="1"/>
<ellipse cx="629.50" cy="409.75" rx="4.30" ry="2.50" fill="#848888" stroke="#1f3438" stroke-width="1"/>
<ellipse cx="677.25" cy="411.50" rx="4.30" ry="2.50" fill="#848888" stroke="#1f3438" stroke-width="1"/>
<ellipse cx="843.25" cy="410.00" rx="4.30" ry="2.50" fill="#848888" stroke="#1f3438" stroke-width="1"/>
<ellipse cx="883.25" cy="421.75" rx="4.30" ry="2.50" fill="#848888" stroke="#1f3438" stroke-width="1"/>
<ellipse cx="793.75" cy="446.25" rx="4.30" ry="2.50" fill="#848888" stroke="#1f3438" stroke-width="1"/>
<ellipse cx="824.00" cy="468.25" rx="4.30" ry="2.50" fill="#848888" stroke="#1f3438" stroke-width="1"/>
<ellipse cx="514.75" cy="295.60" rx="6.30" ry="3.50" fill="#848888" stroke="#1f3438" stroke-width="1"/>
<ellipse cx="1053.40" cy="457.40" rx="6.30" ry="3.50" fill="#848888" stroke="#1f3438" stroke-width="1"/>
<ellipse cx="1175" cy="448.8" rx="1.7" ry="3.5" fill="#fff" stroke="#1f3438" stroke-width=".8" transform="rotate(25 1175 448.8)"/>
<ellipse cx="1166.5" cy="458" rx="1.7" ry="3.5" fill="#fff" stroke="#1f3438" stroke-width=".8" transform="rotate(25 1166.5 458)"/>
<ellipse cx="1132.5" cy="494" rx="3.6" ry="7" fill="#e8e8e8" stroke="#1f3438" stroke-width=".8" transform="rotate(20 1132.5 494)"/>
<polyline points="1193,367.5 1221,376 1207,391 1201,389" fill="none" stroke="#1f3438" stroke-width=".8"/>
<polyline points="1193,367.5 1191,370.5 1214,377.5" fill="none" stroke="#1f3438" stroke-width=".8"/>
<g stroke="#fff" stroke-width="1" fill="none"><path d="M324 649.500h941M1330 649.500h30M1298.500 147v469M1298.500 636v28M1284 649.500h29"/></g>
<circle cx="1298.500" cy="650" r="10.500" fill="none" stroke="#fff" stroke-width="1" stroke-dasharray="12 4.500" stroke-dashoffset="6" shape-rendering="auto"/>
<g shape-rendering="auto"><path d="M350.800 597L359.400 588l5.400.800 12.300 4.100v13.800l-6.400 7.500-7.500.800-12.400-4.200z" fill="#aaaaaa"/><path d="M350.800 597l12.400 4v14M363.200 601l13.900-8.100M359.400 588v14l-8.600 8.800M359.400 602l17.700 4.700" fill="none" stroke="#b8b8b8" stroke-width=".7"/><path d="M367.900 614.500v-21.500" stroke="#1030d8" stroke-width="2"/><rect x="366.200" y="596" width="3.400" height="3.600" fill="#1030d8"/><path d="M363.500 616L346 610.500" stroke="#20b030" stroke-width="1.500"/><path d="M340.200 609l8-.2-1.500 2.800z" fill="#20c038"/><path d="M371 614.500l10.500-11" stroke="#e02828" stroke-width="1.300"/><circle cx="367.800" cy="618" r="4.300" fill="#e4e4e0"/><circle cx="366.800" cy="617" r="2" fill="#ffffff"/></g>
<g font-family="Liberation Sans, sans-serif" font-size="10.500" shape-rendering="auto"><text x="364.600" y="592.800" fill="#1040e8">Z</text><text x="380" y="603.800" fill="#a83030">X</text><text x="331.800" y="613" fill="#20a828">Y</text></g>
</svg>
<div class="a" style="left:5px;top:502px;color:#f0a050;font-size:12px;line-height:14px;letter-spacing:1px;white-space:nowrap">正三轴测图 工作 摄像机 正三轴测图</div>
</div>
<div class="a" style="left:1282px;top:667px;width:32px;height:8px;overflow:hidden"><div class="a" style="left:0;top:-24px;width:32px;height:32px;border-radius:50%;background:#f0e800"></div></div>
<div id="btb" class="a"></div>
<div class="a" style="left:537px;top:668px;width:1px;height:28px;background:#c4c8c0"></div>
<svg style="left:7px;top:671px" width="24" height="24" viewBox="0 0 24 24"><circle cx="5" cy="4.500" r="3.200" fill="#181c30" stroke="#5868a0" stroke-width=".9"/><circle cx="12" cy="6" r="3.200" fill="#181c30" stroke="#5868a0" stroke-width=".9"/><path d="M3 1.500l10 2.500" stroke="#38406c" stroke-width="1.800"/><circle cx="4.200" cy="3.800" r="1" fill="#c8d0f0"/><circle cx="11.200" cy="5.300" r="1" fill="#c8d0f0"/><path d="M9 23l12-3-2 3z" fill="#98a090"/><g transform="translate(6 10) scale(1.35)"><path d="M0 3l5-3 5 2v6l-5 3-5-2z" fill="#f0b828" stroke="#d89010" stroke-width=".8"/><path d="M0 3l5-3 5 2-5 3z" fill="#fff4b8"/><path d="M0 3l5 2v6l-5-2z" fill="#f8dc58"/><path d="M1 4.500l3 1.200v1.500l-3-1.200z" fill="#fffbe0"/></g></svg>
<svg style="left:51px;top:671px" width="24" height="24" viewBox="0 0 24 24"><path d="M3 6l6-4 6 3v5l6 3v7l-7 3-11-5z" fill="#e8f4ff" stroke="#2838b0" stroke-width="1.500"/><path d="M3 6l6 3 6-4M9 9v13M3 13l6 3 6-3M15 10l-6 3M15 13v9" fill="none" stroke="#98a8d0" stroke-width=".8"/></svg>
<svg style="left:81px;top:671px" width="24" height="24" viewBox="0 0 24 24"><rect x="1" y="2" width="22" height="20" fill="#98a0a8" stroke="#7888b0" stroke-width="1"/><rect x="1" y="2" width="22" height="3" fill="#8890b0"/><path d="M5 11l4-2 4 2v5l-4 2-4-2zM11 15l4-2 4 2v4l-4 2-4-2z" fill="#a8a098" stroke="#988878" stroke-width=".7"/></svg>
<svg style="left:113px;top:671px" width="24" height="24" viewBox="0 0 24 24"><g transform="translate(1.5 1.5) scale(0.95)"><path d="M0 3l5-3 5 2v6l-5 3-5-2z" fill="#f0b828" stroke="#d89010" stroke-width=".8"/><path d="M0 3l5-3 5 2-5 3z" fill="#fff4b8"/><path d="M0 3l5 2v6l-5-2z" fill="#f8dc58"/><path d="M1 4.500l3 1.200v1.500l-3-1.200z" fill="#fffbe0"/></g><g transform="translate(1.5 12) scale(0.95)"><path d="M0 3l5-3 5 2v6l-5 3-5-2z" fill="#f0b828" stroke="#d89010" stroke-width=".8"/><path d="M0 3l5-3 5 2-5 3z" fill="#fff4b8"/><path d="M0 3l5 2v6l-5-2z" fill="#f8dc58"/><path d="M1 4.500l3 1.200v1.500l-3-1.200z" fill="#fffbe0"/></g><g transform="translate(9 13) scale(0.95)"><path d="M0 3l5-3 5 2v6l-5 3-5-2z" fill="#f0b828" stroke="#d89010" stroke-width=".8"/><path d="M0 3l5-3 5 2-5 3z" fill="#fff4b8"/><path d="M0 3l5 2v6l-5-2z" fill="#f8dc58"/><path d="M1 4.500l3 1.200v1.500l-3-1.200z" fill="#fffbe0"/></g><path d="M18.500 1v9M14 5.500h9" stroke="#1878f0" stroke-width="2.200"/></svg>
<svg style="left:156px;top:671px" width="24" height="24" viewBox="0 0 24 24"><g transform="translate(8 7) scale(1)"><path d="M0 3l5-3 5 2v6l-5 3-5-2z" fill="#f0b828" stroke="#d89010" stroke-width=".8"/><path d="M0 3l5-3 5 2-5 3z" fill="#fff4b8"/><path d="M0 3l5 2v6l-5-2z" fill="#f8dc58"/><path d="M1 4.500l3 1.200v1.500l-3-1.200z" fill="#fffbe0"/></g><path d="M15 2h6v6M17 4.500h2v2" fill="none" stroke="#2848b8" stroke-width="1"/><path d="M2 15v6h6M4.500 17v2h2" fill="none" stroke="#2848b8" stroke-width="1" stroke-dasharray="1.500 1"/></svg>
<svg style="left:186px;top:671px" width="24" height="24" viewBox="0 0 24 24"><path d="M3 1l7 5.500L3 12zM21 1l-7 5.500 7 5.500z" fill="#1020e0"/><path d="M12 0v24" stroke="#101010" stroke-width="1.200" stroke-dasharray="2 1.300"/><rect x="1" y="14" width="8" height="8" fill="#f8e040" stroke="#a07810" stroke-width="1"/><path d="M14 14l9 8.500h-9z" fill="#e01010" stroke="#901010" stroke-width=".6"/></svg>
<svg style="left:217px;top:671px" width="24" height="24" viewBox="0 0 24 24"><path d="M1 5l7 4.500L1 14z" fill="#18b030"/><path d="M3 13l7 4.500L3 22z" fill="#e01818"/><path d="M18 1v8M13 9h10" stroke="#800880" stroke-width="1.400"/><path d="M13 21l7-8M16 22l7-8" stroke="#800880" stroke-width="1.400"/></svg>
<svg style="left:254px;top:671px" width="24" height="24" viewBox="0 0 24 24"><path d="M2 17c-2 3 1 6 4 3l7-7-3-3z" fill="#f8d048" stroke="#b88810" stroke-width=".8"/><circle cx="4" cy="19" r="1.200" fill="#fff"/><g fill="#f8f0a0" stroke="#806890" stroke-width="1"><rect x="10" y="2" width="6" height="6"/><rect x="10" y="8" width="6" height="6"/><rect x="16" y="8" width="6" height="6"/></g></svg>
<svg style="left:285px;top:671px" width="24" height="24" viewBox="0 0 24 24"><g transform="translate(4 1.5) scale(0.95)"><path d="M0 3l5-3 5 2v6l-5 3-5-2z" fill="#f0b828" stroke="#d89010" stroke-width=".8"/><path d="M0 3l5-3 5 2-5 3z" fill="#fff4b8"/><path d="M0 3l5 2v6l-5-2z" fill="#f8dc58"/><path d="M1 4.500l3 1.200v1.500l-3-1.200z" fill="#fffbe0"/></g><g transform="translate(2 12) scale(0.95)"><path d="M0 3l5-3 5 2v6l-5 3-5-2z" fill="#f0b828" stroke="#d89010" stroke-width=".8"/><path d="M0 3l5-3 5 2-5 3z" fill="#fff4b8"/><path d="M0 3l5 2v6l-5-2z" fill="#f8dc58"/><path d="M1 4.500l3 1.200v1.500l-3-1.200z" fill="#fffbe0"/></g><g transform="translate(12 12) scale(0.95)"><path d="M0 3l5-3 5 2v6l-5 3-5-2z" fill="#f0b828" stroke="#d89010" stroke-width=".8"/><path d="M0 3l5-3 5 2-5 3z" fill="#fff4b8"/><path d="M0 3l5 2v6l-5-2z" fill="#f8dc58"/><path d="M1 4.500l3 1.200v1.500l-3-1.200z" fill="#fffbe0"/></g></svg>
<svg style="left:317px;top:671px" width="24" height="24" viewBox="0 0 24 24"><rect x="10" y="2" width="6" height="6" fill="#fff" stroke="#101010" stroke-width="1.200"/><rect x="5.500" y="8" width="6" height="6" fill="#fff" stroke="#101010" stroke-width="1.200"/><rect x="1" y="14" width="6" height="6" fill="#f8e040" stroke="#e01010" stroke-width="1.400"/></svg>
<svg style="left:353px;top:671px" width="24" height="24" viewBox="0 0 24 24"><path d="M4 6l9-4 9 3v12l-9 5-9-4z" fill="#e0e0e0" stroke="#606060" stroke-width=".9"/><path d="M4 6l9 3 9-4M13 9v13" stroke="#606060" stroke-width=".9" fill="none"/><path d="M13 9l9-4v12l-9 5z" fill="#a8a8a8"/><path d="M1 15l12-3 2 6-12 4z" fill="#f8d880" stroke="#c07818" stroke-width=".9"/><path d="M4 16.500l8-2M4.500 19l8-2" stroke="#c07818" stroke-width=".8"/><circle cx="14" cy="13" r="1" fill="#e01010"/></svg>
<svg style="left:393px;top:671px" width="24" height="24" viewBox="0 0 24 24"><ellipse cx="8" cy="8" rx="4" ry="6.500" fill="none" stroke="#c8a818" stroke-width="2.400"/><ellipse cx="11" cy="15.500" rx="4" ry="6.500" fill="none" stroke="#d8b820" stroke-width="2.400"/><ellipse cx="8" cy="8" rx="4" ry="6.500" fill="none" stroke="#f8e880" stroke-width=".7"/></svg>
<svg style="left:421px;top:671px" width="24" height="24" viewBox="0 0 24 24"><rect x="7" y="3" width="16" height="4" fill="#f4f4f4" stroke="#404040" stroke-width="1"/><path d="M7 5H3v7" fill="none" stroke="#404040" stroke-width="1.200"/><path d="M1 10l2 4 2-4z" fill="#404040"/><ellipse cx="16" cy="12" rx="2.800" ry="4.200" fill="none" stroke="#c8a818" stroke-width="2"/><ellipse cx="18" cy="18" rx="2.800" ry="4.200" fill="none" stroke="#d8b820" stroke-width="2"/></svg>
<svg style="left:452px;top:671px" width="24" height="24" viewBox="0 0 24 24"><path d="M1 12h7l8-8M8 12l8-2M8 12l7 6" fill="none" stroke="#3850b8" stroke-width="1.200"/><rect x="1" y="10.500" width="7" height="3" rx="1.500" fill="#b8c8f8" stroke="#3850b8" stroke-width=".7"/><rect x="15" y="2" width="8" height="3" rx="1.500" fill="#b8c8f8" stroke="#3850b8" stroke-width=".7"/><rect x="15" y="8" width="8" height="3" rx="1.500" fill="#b8c8f8" stroke="#3850b8" stroke-width=".7"/><rect x="13" y="13" width="10" height="10" fill="#fff" stroke="#101890" stroke-width="1.400"/><rect x="17" y="17" width="2.200" height="4.500" fill="#101890"/><rect x="17" y="14.500" width="2.200" height="1.800" fill="#101890"/></svg>
<svg style="left:487px;top:671px" width="24" height="24" viewBox="0 0 24 24"><path d="M10 5l6-3 6 3v7l-6 3-6-3z" fill="#f8f8f8" stroke="#303030" stroke-width="1.200"/><path d="M10 5l6 3 6-3M16 8v7" fill="none" stroke="#303030" stroke-width="1"/><path d="M1 13l6-3 6 3v7l-6 3-6-3z" fill="#f8f8f8" stroke="#303030" stroke-width="1.200"/><path d="M1 13l6 3 6-3M7 16v7" fill="none" stroke="#303030" stroke-width="1"/><path d="M9 11l4 1-1 3z" fill="#e03030"/></svg>
<div class="a arr" style="left:37.5px;top:681px"></div>
<div class="a arr" style="left:142.5px;top:681px"></div>
<div class="a arr" style="left:515.5px;top:681px"></div>
<div class="a arrs" style="left:526.5px;top:688px"></div>
<div class="a sep" style="left:247px;top:670px;height:26px"></div>
<div class="a sep" style="left:346px;top:670px;height:26px"></div>
<div class="a sep" style="left:383px;top:670px;height:26px"></div>
<div class="a sep" style="left:482px;top:670px;height:26px"></div>
<div class="a grip" style="left:1px;top:672px;height:22px"></div>
<div class="a" style="left:1282px;top:667px;width:32px;height:8px;overflow:hidden"><div class="a" style="left:0;top:-24px;width:32px;height:32px;border-radius:50%;background:#f0e800"></div></div>
<div id="status" class="a"><b>选择现有的 CSYS</b></div>
<div class="a" style="left:631px;top:703px;width:2px;height:17px;border-left:1px solid #b8bcb4;border-right:1px solid #f8faf4"></div>
<div class="a" style="left:1267px;top:703px;width:2px;height:17px;border-left:1px solid #b8bcb4;border-right:1px solid #f8faf4"></div>
<div class="a" style="left:1287px;top:703px;width:2px;height:17px;border-left:1px solid #b8bcb4;border-right:1px solid #f8faf4"></div>
<div class="a" style="left:1343px;top:703px;width:2px;height:17px;border-left:1px solid #b8bcb4;border-right:1px solid #f8faf4"></div>
<svg style="left:1291px;top:704px" width="16" height="16" viewBox="0 0 16 16"><defs><linearGradient id="sbg" x1="0" x2="0" y1="0" y2="1"><stop offset="0" stop-color="#1040c8"/><stop offset="1" stop-color="#78c0f8"/></linearGradient></defs><path d="M.5 4V.5H4M12 .5h3.500V4M.5 12.500V16H4M15.500 12.500V16H12" fill="none" stroke="#fff" stroke-width="1.600"/><path d="M.5 4V.5H4M12 .5h3.500V4" fill="none" stroke="#7090a0" stroke-width=".8"/><rect x="3.500" y="3.800" width="9" height="8.800" rx="1" fill="#fff" stroke="#383858" stroke-width="1.300"/><rect x="3.500" y="3.500" width="9" height="1.800" fill="#383858"/><rect x="5.200" y="6.200" width="5.600" height="4.800" fill="url(#sbg)"/></svg>
</body></html>
